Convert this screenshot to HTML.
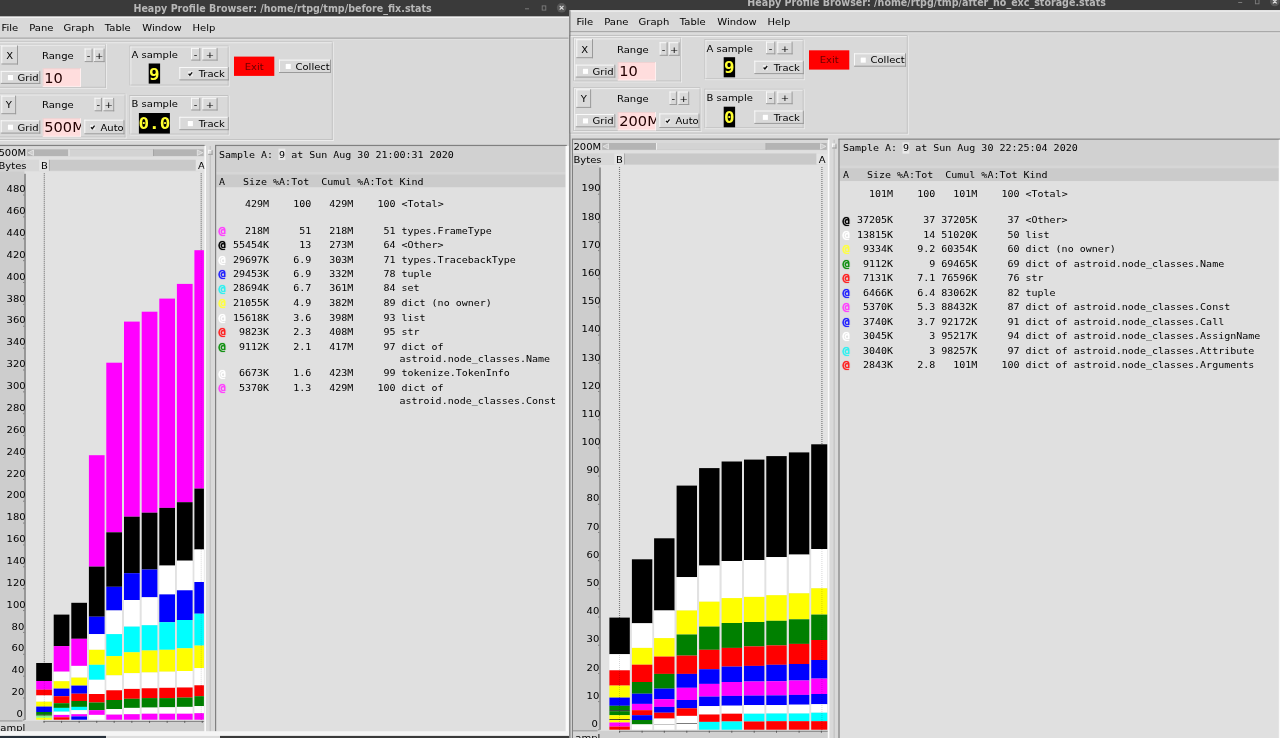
<!DOCTYPE html>
<html><head><meta charset="utf-8"><title>Heapy Profile Browser</title>
<style>
html,body{margin:0;padding:0;}
body{width:1280px;height:738px;overflow:hidden;position:relative;background:#d9d9d9;font-family:'DejaVu Sans','Liberation Sans',sans-serif;font-size:10px;color:#000;}
div,svg,span{position:absolute;margin:0;padding:0;}
#L,#R{top:0;height:738px;overflow:hidden;will-change:transform;}
#L{left:0;width:569px;}
#R{left:569px;width:711px;background:#d9d9d9;}
</style></head><body>

<div id="L">
<svg style="left:0;top:0" width="569" height="738" viewBox="0 0 569 738">
<rect x="-8.00" y="-10.00" width="577.40" height="26.55" fill="#3a3a3a"/>
<rect x="-5.00" y="16.55" width="574.40" height="1.40" fill="#f2f2f2"/>
<rect x="525.00" y="8.30" width="4.00" height="1.00" fill="#7a7a7a"/>
<rect x="542.20" y="5.90" width="3.6" height="4.2" fill="none" stroke="#7d7d7d" stroke-width="0.9"/>
<circle cx="561.60" cy="7.80" r="4.8" fill="#585858"/><path transform="translate(561.60,7.80)" d="M-1.9 -1.9 L1.9 1.9 M1.9 -1.9 L-1.9 1.9" stroke="#dedede" stroke-width="1.2"/>
<rect x="-5.00" y="37.70" width="573.40" height="1.00" fill="#8a8a8a"/>
<rect x="-5.00" y="38.70" width="573.40" height="0.90" fill="#e4e4e4"/>
<rect x="-6.00" y="41.40" width="339.60" height="0.90" fill="#c0c0c0"/>
<rect x="-6.00" y="41.40" width="0.90" height="99.40" fill="#c0c0c0"/>
<rect x="-5.10" y="42.30" width="337.80" height="0.90" fill="#f0f0f0"/>
<rect x="-5.10" y="42.30" width="0.90" height="97.60" fill="#f0f0f0"/>
<rect x="-6.00" y="139.90" width="339.60" height="0.90" fill="#f0f0f0"/>
<rect x="332.70" y="41.40" width="0.90" height="99.40" fill="#f0f0f0"/>
<rect x="-5.10" y="139.00" width="337.80" height="0.90" fill="#c0c0c0"/>
<rect x="331.80" y="42.30" width="0.90" height="97.60" fill="#c0c0c0"/>
<rect x="-1.80" y="43.80" width="108.80" height="0.90" fill="#c0c0c0"/>
<rect x="-1.80" y="43.80" width="0.90" height="44.80" fill="#c0c0c0"/>
<rect x="-0.90" y="44.70" width="107.00" height="0.90" fill="#f0f0f0"/>
<rect x="-0.90" y="44.70" width="0.90" height="43.00" fill="#f0f0f0"/>
<rect x="-1.80" y="87.70" width="108.80" height="0.90" fill="#f0f0f0"/>
<rect x="106.10" y="43.80" width="0.90" height="44.80" fill="#f0f0f0"/>
<rect x="-0.90" y="86.80" width="107.00" height="0.90" fill="#c0c0c0"/>
<rect x="105.20" y="44.70" width="0.90" height="43.00" fill="#c0c0c0"/>
<rect x="1.30" y="45.50" width="16.70" height="19.00" fill="#d9d9d9"/>
<rect x="1.30" y="45.50" width="16.70" height="1.00" fill="#f8f8f8"/>
<rect x="1.30" y="45.50" width="1.00" height="19.00" fill="#f8f8f8"/>
<rect x="1.30" y="63.50" width="16.70" height="1.00" fill="#9a9a9a"/>
<rect x="17.00" y="45.50" width="1.00" height="19.00" fill="#9a9a9a"/>
<rect x="84.60" y="48.50" width="8.00" height="13.60" fill="#d9d9d9"/>
<rect x="84.60" y="48.50" width="8.00" height="1.00" fill="#f8f8f8"/>
<rect x="84.60" y="48.50" width="1.00" height="13.60" fill="#f8f8f8"/>
<rect x="84.60" y="61.10" width="8.00" height="1.00" fill="#9a9a9a"/>
<rect x="91.60" y="48.50" width="1.00" height="13.60" fill="#9a9a9a"/>
<rect x="93.80" y="48.50" width="10.80" height="13.60" fill="#d9d9d9"/>
<rect x="93.80" y="48.50" width="10.80" height="1.00" fill="#f8f8f8"/>
<rect x="93.80" y="48.50" width="1.00" height="13.60" fill="#f8f8f8"/>
<rect x="93.80" y="61.10" width="10.80" height="1.00" fill="#9a9a9a"/>
<rect x="103.60" y="48.50" width="1.00" height="13.60" fill="#9a9a9a"/>
<rect x="0.70" y="70.90" width="39.60" height="13.00" fill="#d9d9d9"/>
<rect x="0.70" y="70.90" width="39.60" height="1.00" fill="#f8f8f8"/>
<rect x="0.70" y="70.90" width="1.00" height="13.00" fill="#f8f8f8"/>
<rect x="0.70" y="82.90" width="39.60" height="1.00" fill="#9a9a9a"/>
<rect x="39.30" y="70.90" width="1.00" height="13.00" fill="#9a9a9a"/>
<rect x="7.30" y="74.50" width="5.70" height="5.70" fill="#d0d0d0"/>
<rect x="7.80" y="75.00" width="5.20" height="5.20" fill="#ffffff"/>
<rect x="42.80" y="68.40" width="38.20" height="18.30" fill="#ffdddd"/>
<rect x="42.80" y="68.40" width="38.20" height="0.80" fill="#ecd0d0"/>
<rect x="42.80" y="68.40" width="0.80" height="18.30" fill="#ecd0d0"/>
<rect x="42.80" y="85.90" width="38.20" height="0.80" fill="#fff4f4"/>
<rect x="80.20" y="68.40" width="0.80" height="18.30" fill="#fff4f4"/>
<rect x="-1.80" y="93.60" width="128.20" height="0.90" fill="#c0c0c0"/>
<rect x="-1.80" y="93.60" width="0.90" height="44.70" fill="#c0c0c0"/>
<rect x="-0.90" y="94.50" width="126.40" height="0.90" fill="#f0f0f0"/>
<rect x="-0.90" y="94.50" width="0.90" height="42.90" fill="#f0f0f0"/>
<rect x="-1.80" y="137.40" width="128.20" height="0.90" fill="#f0f0f0"/>
<rect x="125.50" y="93.60" width="0.90" height="44.70" fill="#f0f0f0"/>
<rect x="-0.90" y="136.50" width="126.40" height="0.90" fill="#c0c0c0"/>
<rect x="124.60" y="94.50" width="0.90" height="42.90" fill="#c0c0c0"/>
<rect x="1.30" y="95.60" width="14.80" height="18.60" fill="#d9d9d9"/>
<rect x="1.30" y="95.60" width="14.80" height="1.00" fill="#f8f8f8"/>
<rect x="1.30" y="95.60" width="1.00" height="18.60" fill="#f8f8f8"/>
<rect x="1.30" y="113.20" width="14.80" height="1.00" fill="#9a9a9a"/>
<rect x="15.10" y="95.60" width="1.00" height="18.60" fill="#9a9a9a"/>
<rect x="94.50" y="97.80" width="7.40" height="13.50" fill="#d9d9d9"/>
<rect x="94.50" y="97.80" width="7.40" height="1.00" fill="#f8f8f8"/>
<rect x="94.50" y="97.80" width="1.00" height="13.50" fill="#f8f8f8"/>
<rect x="94.50" y="110.30" width="7.40" height="1.00" fill="#9a9a9a"/>
<rect x="100.90" y="97.80" width="1.00" height="13.50" fill="#9a9a9a"/>
<rect x="103.40" y="97.80" width="10.80" height="13.50" fill="#d9d9d9"/>
<rect x="103.40" y="97.80" width="10.80" height="1.00" fill="#f8f8f8"/>
<rect x="103.40" y="97.80" width="1.00" height="13.50" fill="#f8f8f8"/>
<rect x="103.40" y="110.30" width="10.80" height="1.00" fill="#9a9a9a"/>
<rect x="113.20" y="97.80" width="1.00" height="13.50" fill="#9a9a9a"/>
<rect x="0.70" y="120.30" width="39.60" height="13.30" fill="#d9d9d9"/>
<rect x="0.70" y="120.30" width="39.60" height="1.00" fill="#f8f8f8"/>
<rect x="0.70" y="120.30" width="1.00" height="13.30" fill="#f8f8f8"/>
<rect x="0.70" y="132.60" width="39.60" height="1.00" fill="#9a9a9a"/>
<rect x="39.30" y="120.30" width="1.00" height="13.30" fill="#9a9a9a"/>
<rect x="7.30" y="124.10" width="5.70" height="5.70" fill="#d0d0d0"/>
<rect x="7.80" y="124.60" width="5.20" height="5.20" fill="#ffffff"/>
<rect x="42.80" y="118.30" width="38.20" height="18.30" fill="#ffdddd"/>
<rect x="42.80" y="118.30" width="38.20" height="0.80" fill="#ecd0d0"/>
<rect x="42.80" y="118.30" width="0.80" height="18.30" fill="#ecd0d0"/>
<rect x="42.80" y="135.80" width="38.20" height="0.80" fill="#fff4f4"/>
<rect x="80.20" y="118.30" width="0.80" height="18.30" fill="#fff4f4"/>
<rect x="84.30" y="119.70" width="40.20" height="14.60" fill="#d9d9d9"/>
<rect x="84.30" y="119.70" width="40.20" height="1.00" fill="#f8f8f8"/>
<rect x="84.30" y="119.70" width="1.00" height="14.60" fill="#f8f8f8"/>
<rect x="84.30" y="133.30" width="40.20" height="1.00" fill="#9a9a9a"/>
<rect x="123.50" y="119.70" width="1.00" height="14.60" fill="#9a9a9a"/>
<rect x="89.60" y="124.10" width="5.70" height="5.70" fill="#d0d0d0"/>
<rect x="90.10" y="124.60" width="5.20" height="5.20" fill="#f0f0f0"/>
<path transform="translate(90.10,124.60)" d="M0.9 2.6 L2.2 4.0 L4.5 1.1" fill="none" stroke="#111" stroke-width="1.35"/>
<rect x="129.50" y="45.60" width="100.00" height="0.90" fill="#c0c0c0"/>
<rect x="129.50" y="45.60" width="0.90" height="40.80" fill="#c0c0c0"/>
<rect x="130.40" y="46.50" width="98.20" height="0.90" fill="#f0f0f0"/>
<rect x="130.40" y="46.50" width="0.90" height="39.00" fill="#f0f0f0"/>
<rect x="129.50" y="85.50" width="100.00" height="0.90" fill="#f0f0f0"/>
<rect x="228.60" y="45.60" width="0.90" height="40.80" fill="#f0f0f0"/>
<rect x="130.40" y="84.60" width="98.20" height="0.90" fill="#c0c0c0"/>
<rect x="227.70" y="46.50" width="0.90" height="39.00" fill="#c0c0c0"/>
<rect x="191.00" y="47.90" width="9.30" height="12.70" fill="#d9d9d9"/>
<rect x="191.00" y="47.90" width="9.30" height="1.00" fill="#f8f8f8"/>
<rect x="191.00" y="47.90" width="1.00" height="12.70" fill="#f8f8f8"/>
<rect x="191.00" y="59.60" width="9.30" height="1.00" fill="#9a9a9a"/>
<rect x="199.30" y="47.90" width="1.00" height="12.70" fill="#9a9a9a"/>
<rect x="202.30" y="47.90" width="15.30" height="12.70" fill="#d9d9d9"/>
<rect x="202.30" y="47.90" width="15.30" height="1.00" fill="#f8f8f8"/>
<rect x="202.30" y="47.90" width="1.00" height="12.70" fill="#f8f8f8"/>
<rect x="202.30" y="59.60" width="15.30" height="1.00" fill="#9a9a9a"/>
<rect x="216.60" y="47.90" width="1.00" height="12.70" fill="#9a9a9a"/>
<rect x="148.70" y="63.50" width="11.40" height="20.10" fill="#000"/>
<rect x="179.30" y="67.00" width="49.50" height="13.40" fill="#d9d9d9"/>
<rect x="179.30" y="67.00" width="49.50" height="1.00" fill="#f8f8f8"/>
<rect x="179.30" y="67.00" width="1.00" height="13.40" fill="#f8f8f8"/>
<rect x="179.30" y="79.40" width="49.50" height="1.00" fill="#9a9a9a"/>
<rect x="227.80" y="67.00" width="1.00" height="13.40" fill="#9a9a9a"/>
<rect x="187.20" y="70.70" width="5.70" height="5.70" fill="#d0d0d0"/>
<rect x="187.70" y="71.20" width="5.20" height="5.20" fill="#f0f0f0"/>
<path transform="translate(187.70,71.20)" d="M0.9 2.6 L2.2 4.0 L4.5 1.1" fill="none" stroke="#111" stroke-width="1.35"/>
<rect x="234.00" y="56.60" width="40.30" height="19.30" fill="#ff0000"/>
<rect x="279.00" y="59.60" width="52.00" height="13.40" fill="#d9d9d9"/>
<rect x="279.00" y="59.60" width="52.00" height="1.00" fill="#f8f8f8"/>
<rect x="279.00" y="59.60" width="1.00" height="13.40" fill="#f8f8f8"/>
<rect x="279.00" y="72.00" width="52.00" height="1.00" fill="#9a9a9a"/>
<rect x="330.00" y="59.60" width="1.00" height="13.40" fill="#9a9a9a"/>
<rect x="285.10" y="63.30" width="5.70" height="5.70" fill="#d0d0d0"/>
<rect x="285.60" y="63.80" width="5.20" height="5.20" fill="#ffffff"/>
<rect x="129.50" y="95.10" width="100.00" height="0.90" fill="#c0c0c0"/>
<rect x="129.50" y="95.10" width="0.90" height="40.30" fill="#c0c0c0"/>
<rect x="130.40" y="96.00" width="98.20" height="0.90" fill="#f0f0f0"/>
<rect x="130.40" y="96.00" width="0.90" height="38.50" fill="#f0f0f0"/>
<rect x="129.50" y="134.50" width="100.00" height="0.90" fill="#f0f0f0"/>
<rect x="228.60" y="95.10" width="0.90" height="40.30" fill="#f0f0f0"/>
<rect x="130.40" y="133.60" width="98.20" height="0.90" fill="#c0c0c0"/>
<rect x="227.70" y="96.00" width="0.90" height="38.50" fill="#c0c0c0"/>
<rect x="191.00" y="97.80" width="9.30" height="12.70" fill="#d9d9d9"/>
<rect x="191.00" y="97.80" width="9.30" height="1.00" fill="#f8f8f8"/>
<rect x="191.00" y="97.80" width="1.00" height="12.70" fill="#f8f8f8"/>
<rect x="191.00" y="109.50" width="9.30" height="1.00" fill="#9a9a9a"/>
<rect x="199.30" y="97.80" width="1.00" height="12.70" fill="#9a9a9a"/>
<rect x="202.30" y="97.80" width="15.30" height="12.70" fill="#d9d9d9"/>
<rect x="202.30" y="97.80" width="15.30" height="1.00" fill="#f8f8f8"/>
<rect x="202.30" y="97.80" width="1.00" height="12.70" fill="#f8f8f8"/>
<rect x="202.30" y="109.50" width="15.30" height="1.00" fill="#9a9a9a"/>
<rect x="216.60" y="97.80" width="1.00" height="12.70" fill="#9a9a9a"/>
<rect x="138.90" y="113.00" width="31.00" height="20.60" fill="#000"/>
<rect x="179.30" y="116.80" width="49.50" height="13.40" fill="#d9d9d9"/>
<rect x="179.30" y="116.80" width="49.50" height="1.00" fill="#f8f8f8"/>
<rect x="179.30" y="116.80" width="1.00" height="13.40" fill="#f8f8f8"/>
<rect x="179.30" y="129.20" width="49.50" height="1.00" fill="#9a9a9a"/>
<rect x="227.80" y="116.80" width="1.00" height="13.40" fill="#9a9a9a"/>
<rect x="187.20" y="120.50" width="5.70" height="5.70" fill="#d0d0d0"/>
<rect x="187.70" y="121.00" width="5.20" height="5.20" fill="#ffffff"/>
<rect x="27.20" y="149.30" width="176.40" height="6.80" fill="#b4b4b4"/>
<rect x="68.50" y="149.30" width="85.50" height="6.80" fill="#d3d3d3"/>
<rect x="68.50" y="149.30" width="0.90" height="6.80" fill="#f0f0f0"/>
<rect x="153.10" y="149.30" width="0.90" height="6.80" fill="#a0a0a0"/>
<path transform="translate(27.20,149.30)" d="M0.8 3.4 L6.3 0.7 L6.3 6.1 Z" fill="#cdcdcd" stroke="#ececec" stroke-width="0.7"/>
<path transform="translate(196.40,149.30)" d="M6.4 3.4 L0.9 0.7 L0.9 6.1 Z" fill="#cdcdcd" stroke="#ececec" stroke-width="0.7"/>
<rect x="-4.00" y="156.60" width="208.40" height="3.20" fill="#e0e0e0"/>
<rect x="-4.00" y="159.80" width="28.60" height="10.90" fill="#d2d2d2"/>
<rect x="24.60" y="159.80" width="14.70" height="10.90" fill="#d8d8d8"/>
<rect x="49.10" y="159.80" width="146.70" height="10.90" fill="#c9c9c9"/>
<rect x="39.10" y="159.80" width="10.00" height="10.90" fill="#e4e4e4"/>
<rect x="48.90" y="159.80" width="0.90" height="10.90" fill="#a6a6a6"/>
<rect x="195.80" y="159.80" width="8.60" height="10.90" fill="#e4e4e4"/>
<rect x="-4.00" y="171.30" width="28.60" height="549.60" fill="#cdcdcd"/>
<rect x="24.60" y="171.30" width="179.80" height="549.60" fill="#e2e2e2"/>
<rect x="24.20" y="173.80" width="1.60" height="546.10" fill="#858585"/>
<rect x="23.10" y="719.40" width="1.30" height="1.00" fill="#777"/>
<rect x="23.10" y="697.53" width="1.30" height="1.00" fill="#777"/>
<rect x="23.10" y="675.66" width="1.30" height="1.00" fill="#777"/>
<rect x="23.10" y="653.79" width="1.30" height="1.00" fill="#777"/>
<rect x="23.10" y="631.92" width="1.30" height="1.00" fill="#777"/>
<rect x="23.10" y="610.05" width="1.30" height="1.00" fill="#777"/>
<rect x="23.10" y="588.18" width="1.30" height="1.00" fill="#777"/>
<rect x="23.10" y="566.31" width="1.30" height="1.00" fill="#777"/>
<rect x="23.10" y="544.44" width="1.30" height="1.00" fill="#777"/>
<rect x="23.10" y="522.57" width="1.30" height="1.00" fill="#777"/>
<rect x="23.10" y="500.70" width="1.30" height="1.00" fill="#777"/>
<rect x="23.10" y="478.83" width="1.30" height="1.00" fill="#777"/>
<rect x="23.10" y="456.96" width="1.30" height="1.00" fill="#777"/>
<rect x="23.10" y="435.09" width="1.30" height="1.00" fill="#777"/>
<rect x="23.10" y="413.22" width="1.30" height="1.00" fill="#777"/>
<rect x="23.10" y="391.35" width="1.30" height="1.00" fill="#777"/>
<rect x="23.10" y="369.48" width="1.30" height="1.00" fill="#777"/>
<rect x="23.10" y="347.61" width="1.30" height="1.00" fill="#777"/>
<rect x="23.10" y="325.74" width="1.30" height="1.00" fill="#777"/>
<rect x="23.10" y="303.87" width="1.30" height="1.00" fill="#777"/>
<rect x="23.10" y="282.00" width="1.30" height="1.00" fill="#777"/>
<rect x="23.10" y="260.13" width="1.30" height="1.00" fill="#777"/>
<rect x="23.10" y="238.26" width="1.30" height="1.00" fill="#777"/>
<rect x="23.10" y="216.39" width="1.30" height="1.00" fill="#777"/>
<rect x="23.10" y="194.52" width="1.30" height="1.00" fill="#777"/>
<line x1="44.30" y1="173.30" x2="44.30" y2="719.90" stroke="#909090" stroke-width="1.2" stroke-dasharray="1 1"/>
<line x1="201.20" y1="173.30" x2="201.20" y2="719.90" stroke="#909090" stroke-width="1.2" stroke-dasharray="1 1"/>
<rect x="36.20" y="663.00" width="15.70" height="18.00" fill="#000000"/>
<rect x="36.20" y="681.00" width="15.70" height="8.70" fill="#ff00ff"/>
<rect x="36.20" y="689.70" width="15.70" height="5.80" fill="#ff0000"/>
<rect x="36.20" y="695.50" width="15.70" height="6.20" fill="#ffffff"/>
<rect x="36.20" y="701.70" width="15.70" height="4.90" fill="#ffff00"/>
<rect x="36.20" y="706.60" width="15.70" height="5.40" fill="#0000ff"/>
<rect x="36.20" y="712.00" width="15.70" height="2.80" fill="#008000"/>
<rect x="36.20" y="714.80" width="15.70" height="0.80" fill="#000000"/>
<rect x="36.20" y="715.60" width="15.70" height="2.20" fill="#80ff80"/>
<rect x="36.20" y="717.80" width="15.70" height="1.90" fill="#ffff00"/>
<rect x="53.70" y="614.60" width="15.70" height="31.50" fill="#000000"/>
<rect x="53.70" y="646.10" width="15.70" height="25.60" fill="#ff00ff"/>
<rect x="53.70" y="671.70" width="15.70" height="9.50" fill="#ffffff"/>
<rect x="53.70" y="681.20" width="15.70" height="7.40" fill="#ffff00"/>
<rect x="53.70" y="688.60" width="15.70" height="7.60" fill="#0000ff"/>
<rect x="53.70" y="696.20" width="15.70" height="7.00" fill="#ff0000"/>
<rect x="53.70" y="703.20" width="15.70" height="4.70" fill="#008000"/>
<rect x="53.70" y="707.90" width="15.70" height="3.80" fill="#00ffff"/>
<rect x="53.70" y="711.70" width="15.70" height="3.20" fill="#ffffff"/>
<rect x="53.70" y="714.90" width="15.70" height="2.40" fill="#ff00ff"/>
<rect x="53.70" y="717.30" width="15.70" height="2.40" fill="#ff0000"/>
<rect x="71.30" y="602.80" width="15.70" height="36.00" fill="#000000"/>
<rect x="71.30" y="638.80" width="15.70" height="27.10" fill="#ff00ff"/>
<rect x="71.30" y="665.90" width="15.70" height="11.70" fill="#ffffff"/>
<rect x="71.30" y="677.60" width="15.70" height="8.00" fill="#ffff00"/>
<rect x="71.30" y="685.60" width="15.70" height="8.10" fill="#0000ff"/>
<rect x="71.30" y="693.70" width="15.70" height="7.30" fill="#ff0000"/>
<rect x="71.30" y="701.00" width="15.70" height="5.90" fill="#008000"/>
<rect x="71.30" y="706.90" width="15.70" height="3.30" fill="#00ffff"/>
<rect x="71.30" y="710.20" width="15.70" height="4.00" fill="#ffffff"/>
<rect x="71.30" y="714.20" width="15.70" height="2.20" fill="#ff00ff"/>
<rect x="71.30" y="716.40" width="15.70" height="3.30" fill="#0000ff"/>
<rect x="88.90" y="455.20" width="15.70" height="111.40" fill="#ff00ff"/>
<rect x="88.90" y="566.60" width="15.70" height="50.10" fill="#000000"/>
<rect x="88.90" y="616.70" width="15.70" height="17.40" fill="#0000ff"/>
<rect x="88.90" y="634.10" width="15.70" height="15.70" fill="#ffffff"/>
<rect x="88.90" y="649.80" width="15.70" height="15.00" fill="#ffff00"/>
<rect x="88.90" y="664.80" width="15.70" height="15.00" fill="#00ffff"/>
<rect x="88.90" y="679.80" width="15.70" height="14.20" fill="#ffffff"/>
<rect x="88.90" y="694.00" width="15.70" height="8.50" fill="#ff0000"/>
<rect x="88.90" y="702.50" width="15.70" height="7.70" fill="#008000"/>
<rect x="88.90" y="710.20" width="15.70" height="4.70" fill="#ff00ff"/>
<rect x="88.90" y="714.90" width="15.70" height="4.80" fill="#ffffff"/>
<rect x="106.30" y="362.70" width="15.70" height="169.60" fill="#ff00ff"/>
<rect x="106.30" y="532.30" width="15.70" height="54.50" fill="#000000"/>
<rect x="106.30" y="586.80" width="15.70" height="23.70" fill="#0000ff"/>
<rect x="106.30" y="610.50" width="15.70" height="23.60" fill="#ffffff"/>
<rect x="106.30" y="634.10" width="15.70" height="22.00" fill="#00ffff"/>
<rect x="106.30" y="656.10" width="15.70" height="19.30" fill="#ffff00"/>
<rect x="106.30" y="675.40" width="15.70" height="14.90" fill="#ffffff"/>
<rect x="106.30" y="690.30" width="15.70" height="9.70" fill="#ff0000"/>
<rect x="106.30" y="700.00" width="15.70" height="9.10" fill="#008000"/>
<rect x="106.30" y="709.10" width="15.70" height="5.50" fill="#ffffff"/>
<rect x="106.30" y="714.60" width="15.70" height="5.10" fill="#ff00ff"/>
<rect x="124.00" y="321.60" width="15.70" height="195.10" fill="#ff00ff"/>
<rect x="124.00" y="516.70" width="15.70" height="56.50" fill="#000000"/>
<rect x="124.00" y="573.20" width="15.70" height="26.80" fill="#0000ff"/>
<rect x="124.00" y="600.00" width="15.70" height="26.60" fill="#ffffff"/>
<rect x="124.00" y="626.60" width="15.70" height="25.70" fill="#00ffff"/>
<rect x="124.00" y="652.30" width="15.70" height="20.90" fill="#ffff00"/>
<rect x="124.00" y="673.20" width="15.70" height="15.70" fill="#ffffff"/>
<rect x="124.00" y="688.90" width="15.70" height="9.90" fill="#ff0000"/>
<rect x="124.00" y="698.80" width="15.70" height="9.10" fill="#008000"/>
<rect x="124.00" y="707.90" width="15.70" height="6.30" fill="#ffffff"/>
<rect x="124.00" y="714.20" width="15.70" height="5.50" fill="#ff00ff"/>
<rect x="141.70" y="311.70" width="15.70" height="201.00" fill="#ff00ff"/>
<rect x="141.70" y="512.70" width="15.70" height="56.80" fill="#000000"/>
<rect x="141.70" y="569.50" width="15.70" height="27.80" fill="#0000ff"/>
<rect x="141.70" y="597.30" width="15.70" height="27.90" fill="#ffffff"/>
<rect x="141.70" y="625.20" width="15.70" height="25.30" fill="#00ffff"/>
<rect x="141.70" y="650.50" width="15.70" height="22.00" fill="#ffff00"/>
<rect x="141.70" y="672.50" width="15.70" height="15.80" fill="#ffffff"/>
<rect x="141.70" y="688.30" width="15.70" height="9.80" fill="#ff0000"/>
<rect x="141.70" y="698.10" width="15.70" height="9.50" fill="#008000"/>
<rect x="141.70" y="707.60" width="15.70" height="6.10" fill="#ffffff"/>
<rect x="141.70" y="713.70" width="15.70" height="6.00" fill="#ff00ff"/>
<rect x="159.30" y="298.60" width="15.70" height="209.30" fill="#ff00ff"/>
<rect x="159.30" y="507.90" width="15.70" height="57.70" fill="#000000"/>
<rect x="159.30" y="565.60" width="15.70" height="28.80" fill="#ffffff"/>
<rect x="159.30" y="594.40" width="15.70" height="27.80" fill="#0000ff"/>
<rect x="159.30" y="622.20" width="15.70" height="27.60" fill="#00ffff"/>
<rect x="159.30" y="649.80" width="15.70" height="21.90" fill="#ffff00"/>
<rect x="159.30" y="671.70" width="15.70" height="16.10" fill="#ffffff"/>
<rect x="159.30" y="687.80" width="15.70" height="10.30" fill="#ff0000"/>
<rect x="159.30" y="698.10" width="15.70" height="9.20" fill="#008000"/>
<rect x="159.30" y="707.30" width="15.70" height="6.40" fill="#ffffff"/>
<rect x="159.30" y="713.70" width="15.70" height="6.00" fill="#ff00ff"/>
<rect x="176.90" y="283.90" width="15.70" height="218.30" fill="#ff00ff"/>
<rect x="176.90" y="502.20" width="15.70" height="58.50" fill="#000000"/>
<rect x="176.90" y="560.70" width="15.70" height="29.60" fill="#ffffff"/>
<rect x="176.90" y="590.30" width="15.70" height="29.70" fill="#0000ff"/>
<rect x="176.90" y="620.00" width="15.70" height="28.30" fill="#00ffff"/>
<rect x="176.90" y="648.30" width="15.70" height="22.70" fill="#ffff00"/>
<rect x="176.90" y="671.00" width="15.70" height="16.50" fill="#ffffff"/>
<rect x="176.90" y="687.50" width="15.70" height="10.10" fill="#ff0000"/>
<rect x="176.90" y="697.60" width="15.70" height="9.30" fill="#008000"/>
<rect x="176.90" y="706.90" width="15.70" height="6.80" fill="#ffffff"/>
<rect x="176.90" y="713.70" width="15.70" height="6.00" fill="#ff00ff"/>
<rect x="194.40" y="250.20" width="9.50" height="238.40" fill="#ff00ff"/>
<rect x="194.40" y="488.60" width="9.50" height="60.90" fill="#000000"/>
<rect x="194.40" y="549.50" width="9.50" height="32.50" fill="#ffffff"/>
<rect x="194.40" y="582.00" width="9.50" height="31.70" fill="#0000ff"/>
<rect x="194.40" y="613.70" width="9.50" height="31.90" fill="#00ffff"/>
<rect x="194.40" y="645.60" width="9.50" height="22.50" fill="#ffff00"/>
<rect x="194.40" y="668.10" width="9.50" height="17.20" fill="#ffffff"/>
<rect x="194.40" y="685.30" width="9.50" height="10.90" fill="#ff0000"/>
<rect x="194.40" y="696.20" width="9.50" height="9.90" fill="#008000"/>
<rect x="194.40" y="706.10" width="9.50" height="7.10" fill="#ffffff"/>
<rect x="194.40" y="713.20" width="9.50" height="6.50" fill="#ff00ff"/>
<line x1="44.30" y1="173.30" x2="44.30" y2="719.90" stroke="#000" stroke-opacity="0.16" stroke-width="1" stroke-dasharray="1 1"/>
<line x1="201.20" y1="173.30" x2="201.20" y2="719.90" stroke="#000" stroke-opacity="0.16" stroke-width="1" stroke-dasharray="1 1"/>
<rect x="-4.00" y="720.90" width="208.40" height="10.30" fill="#d0d0d0"/>
<rect x="-4.00" y="720.90" width="28.20" height="10.30" fill="#d6d6d6"/>
<rect x="-4.00" y="720.50" width="26.60" height="0.90" fill="#8a8a8a"/>
<rect x="43.55" y="720.90" width="160.85" height="0.90" fill="#777"/>
<rect x="43.55" y="720.90" width="1.00" height="1.90" fill="#555"/>
<rect x="61.05" y="720.90" width="1.00" height="1.90" fill="#555"/>
<rect x="78.65" y="720.90" width="1.00" height="1.90" fill="#555"/>
<rect x="96.25" y="720.90" width="1.00" height="1.90" fill="#555"/>
<rect x="113.65" y="720.90" width="1.00" height="1.90" fill="#555"/>
<rect x="131.35" y="720.90" width="1.00" height="1.90" fill="#555"/>
<rect x="149.05" y="720.90" width="1.00" height="1.90" fill="#555"/>
<rect x="166.65" y="720.90" width="1.00" height="1.90" fill="#555"/>
<rect x="184.25" y="720.90" width="1.00" height="1.90" fill="#555"/>
<rect x="201.75" y="720.90" width="1.00" height="1.90" fill="#555"/>
<rect x="-5.10" y="144.85" width="209.70" height="1.20" fill="#808080"/>
<rect x="-5.10" y="145.40" width="1.10" height="614.60" fill="#808080"/>
<rect x="204.40" y="146.00" width="1.60" height="614.60" fill="#fafafa"/>
<rect x="216.20" y="146.00" width="349.40" height="26.20" fill="#d1d1d1"/>
<rect x="216.20" y="172.00" width="349.40" height="2.60" fill="#d6d6d6"/>
<rect x="216.20" y="174.50" width="349.40" height="12.90" fill="#cbcbcb"/>
<rect x="216.20" y="187.40" width="349.40" height="544.20" fill="#e0e0e0"/>
<rect x="215.00" y="144.85" width="351.80" height="1.20" fill="#808080"/>
<rect x="215.00" y="145.40" width="1.20" height="586.20" fill="#808080"/>
<rect x="565.60" y="146.00" width="3.20" height="586.20" fill="#fafafa"/>
<rect x="278.50" y="148.60" width="6.80" height="11.40" fill="#e9e9e9"/>
<rect x="209.70" y="146.00" width="1.10" height="700.00" fill="#c0c0c0"/>
<rect x="208.10" y="149.90" width="4.50" height="4.90" fill="#d9d9d9"/>
<rect x="208.10" y="149.90" width="4.50" height="1.00" fill="#f8f8f8"/>
<rect x="208.10" y="149.90" width="1.00" height="4.90" fill="#f8f8f8"/>
<rect x="208.10" y="153.80" width="4.50" height="1.00" fill="#9a9a9a"/>
<rect x="211.60" y="149.90" width="1.00" height="4.90" fill="#9a9a9a"/>
<rect x="-4.00" y="731.20" width="580.00" height="4.80" fill="#f5f5f5"/>
<rect x="-4.00" y="735.90" width="110.00" height="3.00" fill="#27303a"/>
<rect x="106.00" y="735.90" width="114.00" height="3.00" fill="#dcdcdc"/>
<rect x="220.00" y="735.90" width="350.00" height="3.00" fill="#3a3a3a"/>
</svg>
<div style="top:-2.00px;height:21.2px;line-height:21.2px;font-size:10.6px;color:#b8b8b8;white-space:pre;transform:scaleY(0.93);font-weight:bold;left:82.60px;width:400px;text-align:center;font-stretch:condensed;font-family:'DejaVu Sans Condensed','DejaVu Sans',sans-serif;">Heapy Profile Browser: /home/rtpg/tmp/before_fix.stats</div>
<div style="top:18.20px;height:20px;line-height:20px;font-size:10px;color:#000;white-space:pre;transform:scaleY(0.93);left:1.40px;">File</div>
<div style="top:18.20px;height:20px;line-height:20px;font-size:10px;color:#000;white-space:pre;transform:scaleY(0.93);left:29.20px;">Pane</div>
<div style="top:18.20px;height:20px;line-height:20px;font-size:10px;color:#000;white-space:pre;transform:scaleY(0.93);left:63.60px;">Graph</div>
<div style="top:18.20px;height:20px;line-height:20px;font-size:10px;color:#000;white-space:pre;transform:scaleY(0.93);left:104.80px;">Table</div>
<div style="top:18.20px;height:20px;line-height:20px;font-size:10px;color:#000;white-space:pre;transform:scaleY(0.93);left:142.30px;">Window</div>
<div style="top:18.20px;height:20px;line-height:20px;font-size:10px;color:#000;white-space:pre;transform:scaleY(0.93);left:192.60px;">Help</div>
<div style="top:45.80px;height:20px;line-height:20px;font-size:10px;color:#000;white-space:pre;transform:scaleY(0.93);left:-190.30px;width:400px;text-align:center;">X</div>
<div style="top:45.80px;height:20px;line-height:20px;font-size:10px;color:#000;white-space:pre;transform:scaleY(0.93);left:42.00px;">Range</div>
<div style="top:45.80px;height:20px;line-height:20px;font-size:10px;color:#000;white-space:pre;transform:scaleY(0.93);left:-111.40px;width:400px;text-align:center;">-</div>
<div style="top:45.80px;height:20px;line-height:20px;font-size:10px;color:#000;white-space:pre;transform:scaleY(0.93);left:-100.70px;width:400px;text-align:center;">+</div>
<div style="top:67.90px;height:20px;line-height:20px;font-size:10px;color:#000;white-space:pre;transform:scaleY(0.93);left:17.60px;">Grid</div>
<div style="left:42.80px;top:68.40px;width:38.20px;height:18.30px;overflow:hidden;"><span style="position:absolute;left:1.5px;top:-0.90px;font-size:14.6px;line-height:20px;color:#200;transform:scaleY(0.93);transform-origin:50% 70%;">10</span></div>
<div style="top:95.40px;height:20px;line-height:20px;font-size:10px;color:#000;white-space:pre;transform:scaleY(0.93);left:-191.20px;width:400px;text-align:center;">Y</div>
<div style="top:95.40px;height:20px;line-height:20px;font-size:10px;color:#000;white-space:pre;transform:scaleY(0.93);left:42.00px;">Range</div>
<div style="top:95.40px;height:20px;line-height:20px;font-size:10px;color:#000;white-space:pre;transform:scaleY(0.93);left:-101.80px;width:400px;text-align:center;">-</div>
<div style="top:95.40px;height:20px;line-height:20px;font-size:10px;color:#000;white-space:pre;transform:scaleY(0.93);left:-91.20px;width:400px;text-align:center;">+</div>
<div style="top:117.50px;height:20px;line-height:20px;font-size:10px;color:#000;white-space:pre;transform:scaleY(0.93);left:17.60px;">Grid</div>
<div style="left:42.80px;top:118.30px;width:38.20px;height:18.30px;overflow:hidden;"><span style="position:absolute;left:1.5px;top:-0.90px;font-size:14.6px;line-height:20px;color:#200;transform:scaleY(0.93);transform-origin:50% 70%;">500M</span></div>
<div style="top:117.50px;height:20px;line-height:20px;font-size:10px;color:#000;white-space:pre;transform:scaleY(0.93);left:100.50px;">Auto</div>
<div style="top:44.80px;height:20px;line-height:20px;font-size:10px;color:#000;white-space:pre;transform:scaleY(0.93);left:131.50px;">A sample</div>
<div style="top:44.80px;height:20px;line-height:20px;font-size:10px;color:#000;white-space:pre;transform:scaleY(0.93);left:-4.40px;width:400px;text-align:center;">-</div>
<div style="top:44.80px;height:20px;line-height:20px;font-size:10px;color:#000;white-space:pre;transform:scaleY(0.93);left:10.00px;width:400px;text-align:center;">+</div>
<div style="top:56.60px;height:35.2px;line-height:35.2px;font-size:17.6px;color:#ffff30;white-space:pre;transform:scaleY(0.93);font-family:'DejaVu Sans Mono','Liberation Mono',monospace;font-weight:bold;left:-45.60px;width:400px;text-align:center;">9</div>
<div style="top:64.00px;height:20px;line-height:20px;font-size:10px;color:#000;white-space:pre;transform:scaleY(0.93);left:198.70px;">Track</div>
<div style="top:56.70px;height:20px;line-height:20px;font-size:10px;color:#680000;white-space:pre;transform:scaleY(0.93);left:54.20px;width:400px;text-align:center;">Exit</div>
<div style="top:56.70px;height:20px;line-height:20px;font-size:10px;color:#000;white-space:pre;transform:scaleY(0.93);left:295.50px;">Collect</div>
<div style="top:94.30px;height:20px;line-height:20px;font-size:10px;color:#000;white-space:pre;transform:scaleY(0.93);left:131.50px;">B sample</div>
<div style="top:94.70px;height:20px;line-height:20px;font-size:10px;color:#000;white-space:pre;transform:scaleY(0.93);left:-4.40px;width:400px;text-align:center;">-</div>
<div style="top:94.70px;height:20px;line-height:20px;font-size:10px;color:#000;white-space:pre;transform:scaleY(0.93);left:10.00px;width:400px;text-align:center;">+</div>
<div style="top:106.20px;height:35.2px;line-height:35.2px;font-size:17.6px;color:#ffff30;white-space:pre;transform:scaleY(0.93);font-family:'DejaVu Sans Mono','Liberation Mono',monospace;font-weight:bold;left:-45.60px;width:400px;text-align:center;">0.0</div>
<div style="top:113.80px;height:20px;line-height:20px;font-size:10px;color:#000;white-space:pre;transform:scaleY(0.93);left:198.70px;">Track</div>
<div style="top:143.40px;height:20px;line-height:20px;font-size:10px;color:#000;white-space:pre;transform:scaleY(0.93);left:-1.50px;">500M</div>
<div style="top:155.80px;height:20px;line-height:20px;font-size:10px;color:#000;white-space:pre;transform:scaleY(0.93);left:-155.70px;width:400px;text-align:center;">B</div>
<div style="top:155.80px;height:20px;line-height:20px;font-size:10px;color:#000;white-space:pre;transform:scaleY(0.93);left:1.40px;width:400px;text-align:center;clip-path:inset(0 197.00px 0 0);">A</div>
<div style="top:156.40px;height:20px;line-height:20px;font-size:10px;color:#000;white-space:pre;transform:scaleY(0.93);left:-1.50px;">Bytes</div>
<div style="left:-4.00px;top:171.30px;width:29.00px;height:548.60px;overflow:hidden;"><span style="position:absolute;left:20.47px;top:532.80px;line-height:20px;font-size:10px;transform:scaleY(0.93);">0</span><span style="position:absolute;left:15.54px;top:510.93px;line-height:20px;font-size:10px;transform:scaleY(0.93);">20</span><span style="position:absolute;left:15.54px;top:489.06px;line-height:20px;font-size:10px;transform:scaleY(0.93);">40</span><span style="position:absolute;left:15.54px;top:467.19px;line-height:20px;font-size:10px;transform:scaleY(0.93);">60</span><span style="position:absolute;left:15.54px;top:445.32px;line-height:20px;font-size:10px;transform:scaleY(0.93);">80</span><span style="position:absolute;left:10.61px;top:423.45px;line-height:20px;font-size:10px;transform:scaleY(0.93);">100</span><span style="position:absolute;left:10.61px;top:401.58px;line-height:20px;font-size:10px;transform:scaleY(0.93);">120</span><span style="position:absolute;left:10.61px;top:379.71px;line-height:20px;font-size:10px;transform:scaleY(0.93);">140</span><span style="position:absolute;left:10.61px;top:357.84px;line-height:20px;font-size:10px;transform:scaleY(0.93);">160</span><span style="position:absolute;left:10.61px;top:335.97px;line-height:20px;font-size:10px;transform:scaleY(0.93);">180</span><span style="position:absolute;left:10.61px;top:314.10px;line-height:20px;font-size:10px;transform:scaleY(0.93);">200</span><span style="position:absolute;left:10.61px;top:292.23px;line-height:20px;font-size:10px;transform:scaleY(0.93);">220</span><span style="position:absolute;left:10.61px;top:270.36px;line-height:20px;font-size:10px;transform:scaleY(0.93);">240</span><span style="position:absolute;left:10.61px;top:248.49px;line-height:20px;font-size:10px;transform:scaleY(0.93);">260</span><span style="position:absolute;left:10.61px;top:226.62px;line-height:20px;font-size:10px;transform:scaleY(0.93);">280</span><span style="position:absolute;left:10.61px;top:204.75px;line-height:20px;font-size:10px;transform:scaleY(0.93);">300</span><span style="position:absolute;left:10.61px;top:182.88px;line-height:20px;font-size:10px;transform:scaleY(0.93);">320</span><span style="position:absolute;left:10.61px;top:161.01px;line-height:20px;font-size:10px;transform:scaleY(0.93);">340</span><span style="position:absolute;left:10.61px;top:139.14px;line-height:20px;font-size:10px;transform:scaleY(0.93);">360</span><span style="position:absolute;left:10.61px;top:117.27px;line-height:20px;font-size:10px;transform:scaleY(0.93);">380</span><span style="position:absolute;left:10.61px;top:95.40px;line-height:20px;font-size:10px;transform:scaleY(0.93);">400</span><span style="position:absolute;left:10.61px;top:73.53px;line-height:20px;font-size:10px;transform:scaleY(0.93);">420</span><span style="position:absolute;left:10.61px;top:51.66px;line-height:20px;font-size:10px;transform:scaleY(0.93);">440</span><span style="position:absolute;left:10.61px;top:29.79px;line-height:20px;font-size:10px;transform:scaleY(0.93);">460</span><span style="position:absolute;left:10.61px;top:7.92px;line-height:20px;font-size:10px;transform:scaleY(0.93);">480</span></div>
<div style="left:-0.40px;top:720.90px;width:25.60px;height:10.30px;overflow:hidden;"><span style="position:absolute;left:-5.6px;top:-3.30px;line-height:20px;font-size:10px;transform:scaleY(0.93);">Sample</span></div>
<div style="left:-4.00px;top:723.10px;width:208.40px;height:8.10px;overflow:hidden;"><span style="position:absolute;left:38.05px;width:20px;text-align:center;top:1.50px;line-height:20px;font-size:10px;transform:scaleY(0.93);">0</span><span style="position:absolute;left:55.55px;width:20px;text-align:center;top:1.50px;line-height:20px;font-size:10px;transform:scaleY(0.93);">1</span><span style="position:absolute;left:73.15px;width:20px;text-align:center;top:1.50px;line-height:20px;font-size:10px;transform:scaleY(0.93);">2</span><span style="position:absolute;left:90.75px;width:20px;text-align:center;top:1.50px;line-height:20px;font-size:10px;transform:scaleY(0.93);">3</span><span style="position:absolute;left:108.15px;width:20px;text-align:center;top:1.50px;line-height:20px;font-size:10px;transform:scaleY(0.93);">4</span><span style="position:absolute;left:125.85px;width:20px;text-align:center;top:1.50px;line-height:20px;font-size:10px;transform:scaleY(0.93);">5</span><span style="position:absolute;left:143.55px;width:20px;text-align:center;top:1.50px;line-height:20px;font-size:10px;transform:scaleY(0.93);">6</span><span style="position:absolute;left:161.15px;width:20px;text-align:center;top:1.50px;line-height:20px;font-size:10px;transform:scaleY(0.93);">7</span><span style="position:absolute;left:178.75px;width:20px;text-align:center;top:1.50px;line-height:20px;font-size:10px;transform:scaleY(0.93);">8</span><span style="position:absolute;left:196.25px;width:20px;text-align:center;top:1.50px;line-height:20px;font-size:10px;transform:scaleY(0.93);">9</span></div>
<div style="top:144.60px;height:20px;line-height:20px;font-size:10px;color:#000;white-space:pre;transform:scaleY(0.93);font-family:'DejaVu Sans Mono','Liberation Mono',monospace;left:218.90px;">Sample A: 9 at Sun Aug 30 21:00:31 2020</div>
<div style="top:171.70px;height:20px;line-height:20px;font-size:10px;color:#000;white-space:pre;transform:scaleY(0.93);font-family:'DejaVu Sans Mono','Liberation Mono',monospace;left:218.90px;">A   Size %A:Tot  Cumul %A:Tot Kind</div>
<div style="top:193.70px;height:20px;line-height:20px;font-size:10px;color:#000;white-space:pre;transform:scaleY(0.93);font-family:'DejaVu Sans Mono','Liberation Mono',monospace;left:220.90px;">    429M    100   429M    100 &lt;Total&gt;</div>
<div style="top:217.80px;height:24px;line-height:24px;font-size:12px;color:#ff40ff;white-space:pre;transform:scaleY(0.93);font-family:'DejaVu Sans Mono','Liberation Mono',monospace;font-weight:bold;left:218.60px;text-shadow:0 0 1px #ff40ff;">@</div>
<div style="top:220.50px;height:20px;line-height:20px;font-size:10px;color:#000;white-space:pre;transform:scaleY(0.93);font-family:'DejaVu Sans Mono','Liberation Mono',monospace;left:226.92px;">   218M     51   218M     51 types.FrameType</div>
<div style="top:232.40px;height:24px;line-height:24px;font-size:12px;color:#000000;white-space:pre;transform:scaleY(0.93);font-family:'DejaVu Sans Mono','Liberation Mono',monospace;font-weight:bold;left:218.60px;text-shadow:0 0 1px #000000;">@</div>
<div style="top:235.10px;height:20px;line-height:20px;font-size:10px;color:#000;white-space:pre;transform:scaleY(0.93);font-family:'DejaVu Sans Mono','Liberation Mono',monospace;left:226.92px;"> 55454K     13   273M     64 &lt;Other&gt;</div>
<div style="top:247.00px;height:24px;line-height:24px;font-size:12px;color:#ffffff;white-space:pre;transform:scaleY(0.93);font-family:'DejaVu Sans Mono','Liberation Mono',monospace;font-weight:bold;left:218.60px;text-shadow:0 0 1px #ffffff;">@</div>
<div style="top:249.70px;height:20px;line-height:20px;font-size:10px;color:#000;white-space:pre;transform:scaleY(0.93);font-family:'DejaVu Sans Mono','Liberation Mono',monospace;left:226.92px;"> 29697K    6.9   303M     71 types.TracebackType</div>
<div style="top:261.40px;height:24px;line-height:24px;font-size:12px;color:#2020ff;white-space:pre;transform:scaleY(0.93);font-family:'DejaVu Sans Mono','Liberation Mono',monospace;font-weight:bold;left:218.60px;text-shadow:0 0 1px #2020ff;">@</div>
<div style="top:264.10px;height:20px;line-height:20px;font-size:10px;color:#000;white-space:pre;transform:scaleY(0.93);font-family:'DejaVu Sans Mono','Liberation Mono',monospace;left:226.92px;"> 29453K    6.9   332M     78 tuple</div>
<div style="top:275.70px;height:24px;line-height:24px;font-size:12px;color:#30f0f0;white-space:pre;transform:scaleY(0.93);font-family:'DejaVu Sans Mono','Liberation Mono',monospace;font-weight:bold;left:218.60px;text-shadow:0 0 1px #30f0f0;">@</div>
<div style="top:278.40px;height:20px;line-height:20px;font-size:10px;color:#000;white-space:pre;transform:scaleY(0.93);font-family:'DejaVu Sans Mono','Liberation Mono',monospace;left:226.92px;"> 28694K    6.7   361M     84 set</div>
<div style="top:290.30px;height:24px;line-height:24px;font-size:12px;color:#ffff40;white-space:pre;transform:scaleY(0.93);font-family:'DejaVu Sans Mono','Liberation Mono',monospace;font-weight:bold;left:218.60px;text-shadow:0 0 1px #ffff40;">@</div>
<div style="top:293.00px;height:20px;line-height:20px;font-size:10px;color:#000;white-space:pre;transform:scaleY(0.93);font-family:'DejaVu Sans Mono','Liberation Mono',monospace;left:226.92px;"> 21055K    4.9   382M     89 dict (no owner)</div>
<div style="top:304.80px;height:24px;line-height:24px;font-size:12px;color:#ffffff;white-space:pre;transform:scaleY(0.93);font-family:'DejaVu Sans Mono','Liberation Mono',monospace;font-weight:bold;left:218.60px;text-shadow:0 0 1px #ffffff;">@</div>
<div style="top:307.50px;height:20px;line-height:20px;font-size:10px;color:#000;white-space:pre;transform:scaleY(0.93);font-family:'DejaVu Sans Mono','Liberation Mono',monospace;left:226.92px;"> 15618K    3.6   398M     93 list</div>
<div style="top:319.40px;height:24px;line-height:24px;font-size:12px;color:#ff2020;white-space:pre;transform:scaleY(0.93);font-family:'DejaVu Sans Mono','Liberation Mono',monospace;font-weight:bold;left:218.60px;text-shadow:0 0 1px #ff2020;">@</div>
<div style="top:322.10px;height:20px;line-height:20px;font-size:10px;color:#000;white-space:pre;transform:scaleY(0.93);font-family:'DejaVu Sans Mono','Liberation Mono',monospace;left:226.92px;">  9823K    2.3   408M     95 str</div>
<div style="top:334.00px;height:24px;line-height:24px;font-size:12px;color:#109010;white-space:pre;transform:scaleY(0.93);font-family:'DejaVu Sans Mono','Liberation Mono',monospace;font-weight:bold;left:218.60px;text-shadow:0 0 1px #109010;">@</div>
<div style="top:336.70px;height:20px;line-height:20px;font-size:10px;color:#000;white-space:pre;transform:scaleY(0.93);font-family:'DejaVu Sans Mono','Liberation Mono',monospace;left:226.92px;">  9112K    2.1   417M     97 dict of</div>
<div style="top:349.20px;height:20px;line-height:20px;font-size:10px;color:#000;white-space:pre;transform:scaleY(0.93);font-family:'DejaVu Sans Mono','Liberation Mono',monospace;left:399.50px;">astroid.node_classes.Name</div>
<div style="top:360.60px;height:24px;line-height:24px;font-size:12px;color:#ffffff;white-space:pre;transform:scaleY(0.93);font-family:'DejaVu Sans Mono','Liberation Mono',monospace;font-weight:bold;left:218.60px;text-shadow:0 0 1px #ffffff;">@</div>
<div style="top:363.30px;height:20px;line-height:20px;font-size:10px;color:#000;white-space:pre;transform:scaleY(0.93);font-family:'DejaVu Sans Mono','Liberation Mono',monospace;left:226.92px;">  6673K    1.6   423M     99 tokenize.TokenInfo</div>
<div style="top:375.20px;height:24px;line-height:24px;font-size:12px;color:#ff40ff;white-space:pre;transform:scaleY(0.93);font-family:'DejaVu Sans Mono','Liberation Mono',monospace;font-weight:bold;left:218.60px;text-shadow:0 0 1px #ff40ff;">@</div>
<div style="top:377.90px;height:20px;line-height:20px;font-size:10px;color:#000;white-space:pre;transform:scaleY(0.93);font-family:'DejaVu Sans Mono','Liberation Mono',monospace;left:226.92px;">  5370K    1.3   429M    100 dict of</div>
<div style="top:390.50px;height:20px;line-height:20px;font-size:10px;color:#000;white-space:pre;transform:scaleY(0.93);font-family:'DejaVu Sans Mono','Liberation Mono',monospace;left:399.50px;">astroid.node_classes.Const</div>
</div>
<div id="R">
<svg style="left:0;top:0" width="711" height="738" viewBox="0 0 711 738">
<rect x="-2.00" y="-10.00" width="715.60" height="20.25" fill="#3a3a3a"/>
<rect x="1.00" y="10.25" width="712.60" height="1.40" fill="#f2f2f2"/>
<rect x="669.20" y="2.00" width="4.00" height="1.00" fill="#7a7a7a"/>
<rect x="686.40" y="-0.40" width="3.6" height="4.2" fill="none" stroke="#7d7d7d" stroke-width="0.9"/>
<circle cx="705.80" cy="1.50" r="4.8" fill="#585858"/><path transform="translate(705.80,1.50)" d="M-1.9 -1.9 L1.9 1.9 M1.9 -1.9 L-1.9 1.9" stroke="#dedede" stroke-width="1.2"/>
<rect x="1.00" y="31.40" width="711.60" height="1.00" fill="#8a8a8a"/>
<rect x="1.00" y="32.40" width="711.60" height="0.90" fill="#e4e4e4"/>
<rect x="0.00" y="35.10" width="339.60" height="0.90" fill="#c0c0c0"/>
<rect x="0.00" y="35.10" width="0.90" height="99.40" fill="#c0c0c0"/>
<rect x="0.90" y="36.00" width="337.80" height="0.90" fill="#f0f0f0"/>
<rect x="0.90" y="36.00" width="0.90" height="97.60" fill="#f0f0f0"/>
<rect x="0.00" y="133.60" width="339.60" height="0.90" fill="#f0f0f0"/>
<rect x="338.70" y="35.10" width="0.90" height="99.40" fill="#f0f0f0"/>
<rect x="0.90" y="132.70" width="337.80" height="0.90" fill="#c0c0c0"/>
<rect x="337.80" y="36.00" width="0.90" height="97.60" fill="#c0c0c0"/>
<rect x="4.20" y="37.50" width="108.80" height="0.90" fill="#c0c0c0"/>
<rect x="4.20" y="37.50" width="0.90" height="44.80" fill="#c0c0c0"/>
<rect x="5.10" y="38.40" width="107.00" height="0.90" fill="#f0f0f0"/>
<rect x="5.10" y="38.40" width="0.90" height="43.00" fill="#f0f0f0"/>
<rect x="4.20" y="81.40" width="108.80" height="0.90" fill="#f0f0f0"/>
<rect x="112.10" y="37.50" width="0.90" height="44.80" fill="#f0f0f0"/>
<rect x="5.10" y="80.50" width="107.00" height="0.90" fill="#c0c0c0"/>
<rect x="111.20" y="38.40" width="0.90" height="43.00" fill="#c0c0c0"/>
<rect x="7.30" y="39.20" width="16.70" height="19.00" fill="#d9d9d9"/>
<rect x="7.30" y="39.20" width="16.70" height="1.00" fill="#f8f8f8"/>
<rect x="7.30" y="39.20" width="1.00" height="19.00" fill="#f8f8f8"/>
<rect x="7.30" y="57.20" width="16.70" height="1.00" fill="#9a9a9a"/>
<rect x="23.00" y="39.20" width="1.00" height="19.00" fill="#9a9a9a"/>
<rect x="90.60" y="42.20" width="8.00" height="13.60" fill="#d9d9d9"/>
<rect x="90.60" y="42.20" width="8.00" height="1.00" fill="#f8f8f8"/>
<rect x="90.60" y="42.20" width="1.00" height="13.60" fill="#f8f8f8"/>
<rect x="90.60" y="54.80" width="8.00" height="1.00" fill="#9a9a9a"/>
<rect x="97.60" y="42.20" width="1.00" height="13.60" fill="#9a9a9a"/>
<rect x="99.80" y="42.20" width="10.80" height="13.60" fill="#d9d9d9"/>
<rect x="99.80" y="42.20" width="10.80" height="1.00" fill="#f8f8f8"/>
<rect x="99.80" y="42.20" width="1.00" height="13.60" fill="#f8f8f8"/>
<rect x="99.80" y="54.80" width="10.80" height="1.00" fill="#9a9a9a"/>
<rect x="109.60" y="42.20" width="1.00" height="13.60" fill="#9a9a9a"/>
<rect x="6.70" y="64.60" width="39.60" height="13.00" fill="#d9d9d9"/>
<rect x="6.70" y="64.60" width="39.60" height="1.00" fill="#f8f8f8"/>
<rect x="6.70" y="64.60" width="1.00" height="13.00" fill="#f8f8f8"/>
<rect x="6.70" y="76.60" width="39.60" height="1.00" fill="#9a9a9a"/>
<rect x="45.30" y="64.60" width="1.00" height="13.00" fill="#9a9a9a"/>
<rect x="13.30" y="68.20" width="5.70" height="5.70" fill="#d0d0d0"/>
<rect x="13.80" y="68.70" width="5.20" height="5.20" fill="#ffffff"/>
<rect x="48.80" y="62.10" width="38.20" height="18.30" fill="#ffdddd"/>
<rect x="48.80" y="62.10" width="38.20" height="0.80" fill="#ecd0d0"/>
<rect x="48.80" y="62.10" width="0.80" height="18.30" fill="#ecd0d0"/>
<rect x="48.80" y="79.60" width="38.20" height="0.80" fill="#fff4f4"/>
<rect x="86.20" y="62.10" width="0.80" height="18.30" fill="#fff4f4"/>
<rect x="4.20" y="87.30" width="128.20" height="0.90" fill="#c0c0c0"/>
<rect x="4.20" y="87.30" width="0.90" height="44.70" fill="#c0c0c0"/>
<rect x="5.10" y="88.20" width="126.40" height="0.90" fill="#f0f0f0"/>
<rect x="5.10" y="88.20" width="0.90" height="42.90" fill="#f0f0f0"/>
<rect x="4.20" y="131.10" width="128.20" height="0.90" fill="#f0f0f0"/>
<rect x="131.50" y="87.30" width="0.90" height="44.70" fill="#f0f0f0"/>
<rect x="5.10" y="130.20" width="126.40" height="0.90" fill="#c0c0c0"/>
<rect x="130.60" y="88.20" width="0.90" height="42.90" fill="#c0c0c0"/>
<rect x="7.30" y="89.30" width="14.80" height="18.60" fill="#d9d9d9"/>
<rect x="7.30" y="89.30" width="14.80" height="1.00" fill="#f8f8f8"/>
<rect x="7.30" y="89.30" width="1.00" height="18.60" fill="#f8f8f8"/>
<rect x="7.30" y="106.90" width="14.80" height="1.00" fill="#9a9a9a"/>
<rect x="21.10" y="89.30" width="1.00" height="18.60" fill="#9a9a9a"/>
<rect x="100.50" y="91.50" width="7.40" height="13.50" fill="#d9d9d9"/>
<rect x="100.50" y="91.50" width="7.40" height="1.00" fill="#f8f8f8"/>
<rect x="100.50" y="91.50" width="1.00" height="13.50" fill="#f8f8f8"/>
<rect x="100.50" y="104.00" width="7.40" height="1.00" fill="#9a9a9a"/>
<rect x="106.90" y="91.50" width="1.00" height="13.50" fill="#9a9a9a"/>
<rect x="109.40" y="91.50" width="10.80" height="13.50" fill="#d9d9d9"/>
<rect x="109.40" y="91.50" width="10.80" height="1.00" fill="#f8f8f8"/>
<rect x="109.40" y="91.50" width="1.00" height="13.50" fill="#f8f8f8"/>
<rect x="109.40" y="104.00" width="10.80" height="1.00" fill="#9a9a9a"/>
<rect x="119.20" y="91.50" width="1.00" height="13.50" fill="#9a9a9a"/>
<rect x="6.70" y="114.00" width="39.60" height="13.30" fill="#d9d9d9"/>
<rect x="6.70" y="114.00" width="39.60" height="1.00" fill="#f8f8f8"/>
<rect x="6.70" y="114.00" width="1.00" height="13.30" fill="#f8f8f8"/>
<rect x="6.70" y="126.30" width="39.60" height="1.00" fill="#9a9a9a"/>
<rect x="45.30" y="114.00" width="1.00" height="13.30" fill="#9a9a9a"/>
<rect x="13.30" y="117.80" width="5.70" height="5.70" fill="#d0d0d0"/>
<rect x="13.80" y="118.30" width="5.20" height="5.20" fill="#ffffff"/>
<rect x="48.80" y="112.00" width="38.20" height="18.30" fill="#ffdddd"/>
<rect x="48.80" y="112.00" width="38.20" height="0.80" fill="#ecd0d0"/>
<rect x="48.80" y="112.00" width="0.80" height="18.30" fill="#ecd0d0"/>
<rect x="48.80" y="129.50" width="38.20" height="0.80" fill="#fff4f4"/>
<rect x="86.20" y="112.00" width="0.80" height="18.30" fill="#fff4f4"/>
<rect x="90.30" y="113.40" width="40.20" height="14.60" fill="#d9d9d9"/>
<rect x="90.30" y="113.40" width="40.20" height="1.00" fill="#f8f8f8"/>
<rect x="90.30" y="113.40" width="1.00" height="14.60" fill="#f8f8f8"/>
<rect x="90.30" y="127.00" width="40.20" height="1.00" fill="#9a9a9a"/>
<rect x="129.50" y="113.40" width="1.00" height="14.60" fill="#9a9a9a"/>
<rect x="95.60" y="117.80" width="5.70" height="5.70" fill="#d0d0d0"/>
<rect x="96.10" y="118.30" width="5.20" height="5.20" fill="#f0f0f0"/>
<path transform="translate(96.10,118.30)" d="M0.9 2.6 L2.2 4.0 L4.5 1.1" fill="none" stroke="#111" stroke-width="1.35"/>
<rect x="135.50" y="39.30" width="100.00" height="0.90" fill="#c0c0c0"/>
<rect x="135.50" y="39.30" width="0.90" height="40.80" fill="#c0c0c0"/>
<rect x="136.40" y="40.20" width="98.20" height="0.90" fill="#f0f0f0"/>
<rect x="136.40" y="40.20" width="0.90" height="39.00" fill="#f0f0f0"/>
<rect x="135.50" y="79.20" width="100.00" height="0.90" fill="#f0f0f0"/>
<rect x="234.60" y="39.30" width="0.90" height="40.80" fill="#f0f0f0"/>
<rect x="136.40" y="78.30" width="98.20" height="0.90" fill="#c0c0c0"/>
<rect x="233.70" y="40.20" width="0.90" height="39.00" fill="#c0c0c0"/>
<rect x="197.00" y="41.60" width="9.30" height="12.70" fill="#d9d9d9"/>
<rect x="197.00" y="41.60" width="9.30" height="1.00" fill="#f8f8f8"/>
<rect x="197.00" y="41.60" width="1.00" height="12.70" fill="#f8f8f8"/>
<rect x="197.00" y="53.30" width="9.30" height="1.00" fill="#9a9a9a"/>
<rect x="205.30" y="41.60" width="1.00" height="12.70" fill="#9a9a9a"/>
<rect x="208.30" y="41.60" width="15.30" height="12.70" fill="#d9d9d9"/>
<rect x="208.30" y="41.60" width="15.30" height="1.00" fill="#f8f8f8"/>
<rect x="208.30" y="41.60" width="1.00" height="12.70" fill="#f8f8f8"/>
<rect x="208.30" y="53.30" width="15.30" height="1.00" fill="#9a9a9a"/>
<rect x="222.60" y="41.60" width="1.00" height="12.70" fill="#9a9a9a"/>
<rect x="154.70" y="57.20" width="11.40" height="20.10" fill="#000"/>
<rect x="185.30" y="60.70" width="49.50" height="13.40" fill="#d9d9d9"/>
<rect x="185.30" y="60.70" width="49.50" height="1.00" fill="#f8f8f8"/>
<rect x="185.30" y="60.70" width="1.00" height="13.40" fill="#f8f8f8"/>
<rect x="185.30" y="73.10" width="49.50" height="1.00" fill="#9a9a9a"/>
<rect x="233.80" y="60.70" width="1.00" height="13.40" fill="#9a9a9a"/>
<rect x="193.20" y="64.40" width="5.70" height="5.70" fill="#d0d0d0"/>
<rect x="193.70" y="64.90" width="5.20" height="5.20" fill="#f0f0f0"/>
<path transform="translate(193.70,64.90)" d="M0.9 2.6 L2.2 4.0 L4.5 1.1" fill="none" stroke="#111" stroke-width="1.35"/>
<rect x="240.00" y="50.30" width="40.30" height="19.30" fill="#ff0000"/>
<rect x="285.00" y="53.30" width="52.00" height="13.40" fill="#d9d9d9"/>
<rect x="285.00" y="53.30" width="52.00" height="1.00" fill="#f8f8f8"/>
<rect x="285.00" y="53.30" width="1.00" height="13.40" fill="#f8f8f8"/>
<rect x="285.00" y="65.70" width="52.00" height="1.00" fill="#9a9a9a"/>
<rect x="336.00" y="53.30" width="1.00" height="13.40" fill="#9a9a9a"/>
<rect x="291.10" y="57.00" width="5.70" height="5.70" fill="#d0d0d0"/>
<rect x="291.60" y="57.50" width="5.20" height="5.20" fill="#ffffff"/>
<rect x="135.50" y="88.80" width="100.00" height="0.90" fill="#c0c0c0"/>
<rect x="135.50" y="88.80" width="0.90" height="40.30" fill="#c0c0c0"/>
<rect x="136.40" y="89.70" width="98.20" height="0.90" fill="#f0f0f0"/>
<rect x="136.40" y="89.70" width="0.90" height="38.50" fill="#f0f0f0"/>
<rect x="135.50" y="128.20" width="100.00" height="0.90" fill="#f0f0f0"/>
<rect x="234.60" y="88.80" width="0.90" height="40.30" fill="#f0f0f0"/>
<rect x="136.40" y="127.30" width="98.20" height="0.90" fill="#c0c0c0"/>
<rect x="233.70" y="89.70" width="0.90" height="38.50" fill="#c0c0c0"/>
<rect x="197.00" y="91.50" width="9.30" height="12.70" fill="#d9d9d9"/>
<rect x="197.00" y="91.50" width="9.30" height="1.00" fill="#f8f8f8"/>
<rect x="197.00" y="91.50" width="1.00" height="12.70" fill="#f8f8f8"/>
<rect x="197.00" y="103.20" width="9.30" height="1.00" fill="#9a9a9a"/>
<rect x="205.30" y="91.50" width="1.00" height="12.70" fill="#9a9a9a"/>
<rect x="208.30" y="91.50" width="15.30" height="12.70" fill="#d9d9d9"/>
<rect x="208.30" y="91.50" width="15.30" height="1.00" fill="#f8f8f8"/>
<rect x="208.30" y="91.50" width="1.00" height="12.70" fill="#f8f8f8"/>
<rect x="208.30" y="103.20" width="15.30" height="1.00" fill="#9a9a9a"/>
<rect x="222.60" y="91.50" width="1.00" height="12.70" fill="#9a9a9a"/>
<rect x="154.70" y="106.70" width="11.40" height="20.60" fill="#000"/>
<rect x="185.30" y="110.50" width="49.50" height="13.40" fill="#d9d9d9"/>
<rect x="185.30" y="110.50" width="49.50" height="1.00" fill="#f8f8f8"/>
<rect x="185.30" y="110.50" width="1.00" height="13.40" fill="#f8f8f8"/>
<rect x="185.30" y="122.90" width="49.50" height="1.00" fill="#9a9a9a"/>
<rect x="233.80" y="110.50" width="1.00" height="13.40" fill="#9a9a9a"/>
<rect x="193.20" y="114.20" width="5.70" height="5.70" fill="#d0d0d0"/>
<rect x="193.70" y="114.70" width="5.20" height="5.20" fill="#ffffff"/>
<rect x="33.20" y="143.00" width="224.60" height="6.80" fill="#b4b4b4"/>
<rect x="87.00" y="143.00" width="110.50" height="6.80" fill="#d3d3d3"/>
<rect x="87.00" y="143.00" width="0.90" height="6.80" fill="#f0f0f0"/>
<rect x="196.60" y="143.00" width="0.90" height="6.80" fill="#a0a0a0"/>
<path transform="translate(33.20,143.00)" d="M0.8 3.4 L6.3 0.7 L6.3 6.1 Z" fill="#cdcdcd" stroke="#ececec" stroke-width="0.7"/>
<path transform="translate(250.60,143.00)" d="M6.4 3.4 L0.9 0.7 L0.9 6.1 Z" fill="#cdcdcd" stroke="#ececec" stroke-width="0.7"/>
<rect x="4.00" y="150.30" width="254.80" height="3.20" fill="#e0e0e0"/>
<rect x="4.00" y="153.50" width="26.60" height="10.90" fill="#d2d2d2"/>
<rect x="30.60" y="153.50" width="14.90" height="10.90" fill="#d8d8d8"/>
<rect x="55.30" y="153.50" width="192.20" height="10.90" fill="#c9c9c9"/>
<rect x="45.30" y="153.50" width="10.00" height="10.90" fill="#e4e4e4"/>
<rect x="55.10" y="153.50" width="0.90" height="10.90" fill="#a6a6a6"/>
<rect x="247.50" y="153.50" width="11.30" height="10.90" fill="#e4e4e4"/>
<rect x="4.00" y="165.00" width="26.60" height="565.80" fill="#cdcdcd"/>
<rect x="30.60" y="165.00" width="228.20" height="565.80" fill="#e2e2e2"/>
<rect x="30.20" y="167.50" width="1.60" height="562.30" fill="#858585"/>
<rect x="29.10" y="729.30" width="1.30" height="1.00" fill="#777"/>
<rect x="29.10" y="701.11" width="1.30" height="1.00" fill="#777"/>
<rect x="29.10" y="672.92" width="1.30" height="1.00" fill="#777"/>
<rect x="29.10" y="644.73" width="1.30" height="1.00" fill="#777"/>
<rect x="29.10" y="616.54" width="1.30" height="1.00" fill="#777"/>
<rect x="29.10" y="588.35" width="1.30" height="1.00" fill="#777"/>
<rect x="29.10" y="560.16" width="1.30" height="1.00" fill="#777"/>
<rect x="29.10" y="531.97" width="1.30" height="1.00" fill="#777"/>
<rect x="29.10" y="503.78" width="1.30" height="1.00" fill="#777"/>
<rect x="29.10" y="475.59" width="1.30" height="1.00" fill="#777"/>
<rect x="29.10" y="447.40" width="1.30" height="1.00" fill="#777"/>
<rect x="29.10" y="419.21" width="1.30" height="1.00" fill="#777"/>
<rect x="29.10" y="391.02" width="1.30" height="1.00" fill="#777"/>
<rect x="29.10" y="362.83" width="1.30" height="1.00" fill="#777"/>
<rect x="29.10" y="334.64" width="1.30" height="1.00" fill="#777"/>
<rect x="29.10" y="306.45" width="1.30" height="1.00" fill="#777"/>
<rect x="29.10" y="278.26" width="1.30" height="1.00" fill="#777"/>
<rect x="29.10" y="250.07" width="1.30" height="1.00" fill="#777"/>
<rect x="29.10" y="221.88" width="1.30" height="1.00" fill="#777"/>
<rect x="29.10" y="193.69" width="1.30" height="1.00" fill="#777"/>
<line x1="50.50" y1="167.00" x2="50.50" y2="729.80" stroke="#909090" stroke-width="1.2" stroke-dasharray="1 1"/>
<line x1="252.90" y1="167.00" x2="252.90" y2="729.80" stroke="#909090" stroke-width="1.2" stroke-dasharray="1 1"/>
<rect x="40.40" y="617.60" width="20.40" height="36.60" fill="#000000"/>
<rect x="40.40" y="654.20" width="20.40" height="16.10" fill="#ffffff"/>
<rect x="40.40" y="670.30" width="20.40" height="15.30" fill="#ff0000"/>
<rect x="40.40" y="685.60" width="20.40" height="12.00" fill="#ffff00"/>
<rect x="40.40" y="697.60" width="20.40" height="8.20" fill="#0000ff"/>
<rect x="40.40" y="705.80" width="20.40" height="4.60" fill="#008000"/>
<rect x="40.40" y="710.40" width="20.40" height="0.80" fill="#000000"/>
<rect x="40.40" y="711.20" width="20.40" height="4.00" fill="#008000"/>
<rect x="40.40" y="715.20" width="20.40" height="4.10" fill="#ffff00"/>
<rect x="40.40" y="719.30" width="20.40" height="0.80" fill="#000000"/>
<rect x="40.40" y="720.10" width="20.40" height="2.40" fill="#ffff00"/>
<rect x="40.40" y="722.50" width="20.40" height="4.10" fill="#ff00ff"/>
<rect x="40.40" y="726.60" width="20.40" height="3.10" fill="#ff0000"/>
<rect x="62.90" y="559.30" width="20.40" height="64.00" fill="#000000"/>
<rect x="62.90" y="623.30" width="20.40" height="24.60" fill="#ffffff"/>
<rect x="62.90" y="647.90" width="20.40" height="16.80" fill="#ffff00"/>
<rect x="62.90" y="664.70" width="20.40" height="17.30" fill="#ff0000"/>
<rect x="62.90" y="682.00" width="20.40" height="11.70" fill="#008000"/>
<rect x="62.90" y="693.70" width="20.40" height="10.20" fill="#0000ff"/>
<rect x="62.90" y="703.90" width="20.40" height="6.30" fill="#ff00ff"/>
<rect x="62.90" y="710.20" width="20.40" height="5.00" fill="#ff0000"/>
<rect x="62.90" y="715.20" width="20.40" height="4.80" fill="#0000ff"/>
<rect x="62.90" y="720.00" width="20.40" height="4.40" fill="#008000"/>
<rect x="62.90" y="724.40" width="20.40" height="5.30" fill="#ffffff"/>
<rect x="85.10" y="538.30" width="20.40" height="72.20" fill="#000000"/>
<rect x="85.10" y="610.50" width="20.40" height="27.60" fill="#ffffff"/>
<rect x="85.10" y="638.10" width="20.40" height="18.50" fill="#ffff00"/>
<rect x="85.10" y="656.60" width="20.40" height="17.30" fill="#ff0000"/>
<rect x="85.10" y="673.90" width="20.40" height="14.70" fill="#008000"/>
<rect x="85.10" y="688.60" width="20.40" height="10.50" fill="#0000ff"/>
<rect x="85.10" y="699.10" width="20.40" height="7.80" fill="#ff00ff"/>
<rect x="85.10" y="706.90" width="20.40" height="5.80" fill="#0000ff"/>
<rect x="85.10" y="712.70" width="20.40" height="5.90" fill="#ff0000"/>
<rect x="85.10" y="718.60" width="20.40" height="5.60" fill="#ffffff"/>
<rect x="85.10" y="724.20" width="20.40" height="0.60" fill="#9a9a9a"/>
<rect x="85.10" y="724.80" width="20.40" height="4.90" fill="#ffffff"/>
<rect x="107.60" y="485.60" width="20.40" height="91.50" fill="#000000"/>
<rect x="107.60" y="577.10" width="20.40" height="33.40" fill="#ffffff"/>
<rect x="107.60" y="610.50" width="20.40" height="24.00" fill="#ffff00"/>
<rect x="107.60" y="634.50" width="20.40" height="21.10" fill="#008000"/>
<rect x="107.60" y="655.60" width="20.40" height="18.30" fill="#ff0000"/>
<rect x="107.60" y="673.90" width="20.40" height="13.90" fill="#0000ff"/>
<rect x="107.60" y="687.80" width="20.40" height="12.20" fill="#ff00ff"/>
<rect x="107.60" y="700.00" width="20.40" height="8.30" fill="#0000ff"/>
<rect x="107.60" y="708.30" width="20.40" height="7.60" fill="#ff0000"/>
<rect x="107.60" y="715.90" width="20.40" height="7.10" fill="#ffffff"/>
<rect x="107.60" y="723.00" width="20.40" height="0.70" fill="#000000"/>
<rect x="107.60" y="723.70" width="20.40" height="6.00" fill="#ffffff"/>
<rect x="130.10" y="468.10" width="20.40" height="97.50" fill="#000000"/>
<rect x="130.10" y="565.60" width="20.40" height="36.10" fill="#ffffff"/>
<rect x="130.10" y="601.70" width="20.40" height="24.90" fill="#ffff00"/>
<rect x="130.10" y="626.60" width="20.40" height="23.20" fill="#008000"/>
<rect x="130.10" y="649.80" width="20.40" height="19.40" fill="#ff0000"/>
<rect x="130.10" y="669.20" width="20.40" height="14.70" fill="#0000ff"/>
<rect x="130.10" y="683.90" width="20.40" height="12.70" fill="#ff00ff"/>
<rect x="130.10" y="696.60" width="20.40" height="9.50" fill="#0000ff"/>
<rect x="130.10" y="706.10" width="20.40" height="8.40" fill="#ffffff"/>
<rect x="130.10" y="714.50" width="20.40" height="7.40" fill="#ff0000"/>
<rect x="130.10" y="721.90" width="20.40" height="7.80" fill="#00ffff"/>
<rect x="152.60" y="461.50" width="20.40" height="99.50" fill="#000000"/>
<rect x="152.60" y="561.00" width="20.40" height="37.10" fill="#ffffff"/>
<rect x="152.60" y="598.10" width="20.40" height="24.90" fill="#ffff00"/>
<rect x="152.60" y="623.00" width="20.40" height="24.90" fill="#008000"/>
<rect x="152.60" y="647.90" width="20.40" height="18.70" fill="#ff0000"/>
<rect x="152.60" y="666.60" width="20.40" height="15.40" fill="#0000ff"/>
<rect x="152.60" y="682.00" width="20.40" height="13.90" fill="#ff00ff"/>
<rect x="152.60" y="695.90" width="20.40" height="9.80" fill="#0000ff"/>
<rect x="152.60" y="705.70" width="20.40" height="8.00" fill="#ffffff"/>
<rect x="152.60" y="713.70" width="20.40" height="7.80" fill="#ff0000"/>
<rect x="152.60" y="721.50" width="20.40" height="8.20" fill="#00ffff"/>
<rect x="175.00" y="459.60" width="20.40" height="100.40" fill="#000000"/>
<rect x="175.00" y="560.00" width="20.40" height="36.90" fill="#ffffff"/>
<rect x="175.00" y="596.90" width="20.40" height="25.10" fill="#ffff00"/>
<rect x="175.00" y="622.00" width="20.40" height="24.40" fill="#008000"/>
<rect x="175.00" y="646.40" width="20.40" height="19.50" fill="#ff0000"/>
<rect x="175.00" y="665.90" width="20.40" height="15.60" fill="#0000ff"/>
<rect x="175.00" y="681.50" width="20.40" height="14.10" fill="#ff00ff"/>
<rect x="175.00" y="695.60" width="20.40" height="9.50" fill="#0000ff"/>
<rect x="175.00" y="705.10" width="20.40" height="8.60" fill="#ffffff"/>
<rect x="175.00" y="713.70" width="20.40" height="7.80" fill="#00ffff"/>
<rect x="175.00" y="721.50" width="20.40" height="8.20" fill="#ff0000"/>
<rect x="197.30" y="456.10" width="20.40" height="101.00" fill="#000000"/>
<rect x="197.30" y="557.10" width="20.40" height="38.10" fill="#ffffff"/>
<rect x="197.30" y="595.20" width="20.40" height="25.60" fill="#ffff00"/>
<rect x="197.30" y="620.80" width="20.40" height="24.60" fill="#008000"/>
<rect x="197.30" y="645.40" width="20.40" height="19.40" fill="#ff0000"/>
<rect x="197.30" y="664.80" width="20.40" height="16.40" fill="#0000ff"/>
<rect x="197.30" y="681.20" width="20.40" height="14.20" fill="#ff00ff"/>
<rect x="197.30" y="695.40" width="20.40" height="9.70" fill="#0000ff"/>
<rect x="197.30" y="705.10" width="20.40" height="8.40" fill="#ffffff"/>
<rect x="197.30" y="713.50" width="20.40" height="7.70" fill="#00ffff"/>
<rect x="197.30" y="721.20" width="20.40" height="8.50" fill="#ff0000"/>
<rect x="219.90" y="452.40" width="20.40" height="102.20" fill="#000000"/>
<rect x="219.90" y="554.60" width="20.40" height="38.70" fill="#ffffff"/>
<rect x="219.90" y="593.30" width="20.40" height="26.00" fill="#ffff00"/>
<rect x="219.90" y="619.30" width="20.40" height="24.60" fill="#008000"/>
<rect x="219.90" y="643.90" width="20.40" height="20.10" fill="#ff0000"/>
<rect x="219.90" y="664.00" width="20.40" height="16.50" fill="#0000ff"/>
<rect x="219.90" y="680.50" width="20.40" height="14.40" fill="#ff00ff"/>
<rect x="219.90" y="694.90" width="20.40" height="9.80" fill="#0000ff"/>
<rect x="219.90" y="704.70" width="20.40" height="8.80" fill="#ffffff"/>
<rect x="219.90" y="713.50" width="20.40" height="7.70" fill="#00ffff"/>
<rect x="219.90" y="721.20" width="20.40" height="8.50" fill="#ff0000"/>
<rect x="242.20" y="444.30" width="16.10" height="104.70" fill="#000000"/>
<rect x="242.20" y="549.00" width="16.10" height="39.30" fill="#ffffff"/>
<rect x="242.20" y="588.30" width="16.10" height="26.30" fill="#ffff00"/>
<rect x="242.20" y="614.60" width="16.10" height="25.40" fill="#008000"/>
<rect x="242.20" y="640.00" width="16.10" height="20.00" fill="#ff0000"/>
<rect x="242.20" y="660.00" width="16.10" height="18.60" fill="#0000ff"/>
<rect x="242.20" y="678.60" width="16.10" height="15.40" fill="#ff00ff"/>
<rect x="242.20" y="694.00" width="16.10" height="10.20" fill="#0000ff"/>
<rect x="242.20" y="704.20" width="16.10" height="8.50" fill="#ffffff"/>
<rect x="242.20" y="712.70" width="16.10" height="8.50" fill="#00ffff"/>
<rect x="242.20" y="721.20" width="16.10" height="8.50" fill="#ff0000"/>
<line x1="50.50" y1="167.00" x2="50.50" y2="729.80" stroke="#000" stroke-opacity="0.16" stroke-width="1" stroke-dasharray="1 1"/>
<line x1="252.90" y1="167.00" x2="252.90" y2="729.80" stroke="#000" stroke-opacity="0.16" stroke-width="1" stroke-dasharray="1 1"/>
<rect x="4.00" y="730.80" width="254.80" height="11.00" fill="#d0d0d0"/>
<rect x="4.00" y="730.80" width="26.20" height="11.00" fill="#d6d6d6"/>
<rect x="4.00" y="730.40" width="24.60" height="0.90" fill="#8a8a8a"/>
<rect x="50.10" y="730.80" width="208.70" height="0.90" fill="#777"/>
<rect x="50.10" y="730.80" width="1.00" height="1.90" fill="#555"/>
<rect x="72.60" y="730.80" width="1.00" height="1.90" fill="#555"/>
<rect x="94.80" y="730.80" width="1.00" height="1.90" fill="#555"/>
<rect x="117.30" y="730.80" width="1.00" height="1.90" fill="#555"/>
<rect x="139.80" y="730.80" width="1.00" height="1.90" fill="#555"/>
<rect x="162.30" y="730.80" width="1.00" height="1.90" fill="#555"/>
<rect x="184.70" y="730.80" width="1.00" height="1.90" fill="#555"/>
<rect x="207.00" y="730.80" width="1.00" height="1.90" fill="#555"/>
<rect x="229.60" y="730.80" width="1.00" height="1.90" fill="#555"/>
<rect x="251.90" y="730.80" width="1.00" height="1.90" fill="#555"/>
<rect x="2.90" y="138.55" width="256.10" height="1.20" fill="#808080"/>
<rect x="2.90" y="139.10" width="1.10" height="634.60" fill="#808080"/>
<rect x="258.80" y="139.70" width="1.60" height="634.60" fill="#fafafa"/>
<rect x="270.60" y="139.70" width="439.20" height="26.20" fill="#d1d1d1"/>
<rect x="270.60" y="165.70" width="439.20" height="2.60" fill="#d6d6d6"/>
<rect x="270.60" y="168.20" width="439.20" height="12.90" fill="#cbcbcb"/>
<rect x="270.60" y="181.10" width="439.20" height="592.60" fill="#e0e0e0"/>
<rect x="269.40" y="138.55" width="441.60" height="1.20" fill="#808080"/>
<rect x="269.40" y="139.10" width="1.20" height="634.60" fill="#808080"/>
<rect x="709.80" y="139.70" width="3.20" height="634.60" fill="#fafafa"/>
<rect x="333.50" y="142.30" width="6.80" height="11.40" fill="#e9e9e9"/>
<rect x="264.60" y="139.70" width="1.10" height="700.00" fill="#c0c0c0"/>
<rect x="263.00" y="143.60" width="4.50" height="4.90" fill="#d9d9d9"/>
<rect x="263.00" y="143.60" width="4.50" height="1.00" fill="#f8f8f8"/>
<rect x="263.00" y="143.60" width="1.00" height="4.90" fill="#f8f8f8"/>
<rect x="263.00" y="147.50" width="4.50" height="1.00" fill="#9a9a9a"/>
<rect x="266.50" y="143.60" width="1.00" height="4.90" fill="#9a9a9a"/>
<rect x="0.40" y="10.30" width="0.95" height="740.00" fill="#5a5a5a"/>
</svg>
<div style="top:-8.30px;height:21.2px;line-height:21.2px;font-size:10.6px;color:#b8b8b8;white-space:pre;transform:scaleY(0.93);font-weight:bold;left:157.60px;width:400px;text-align:center;font-stretch:condensed;font-family:'DejaVu Sans Condensed','DejaVu Sans',sans-serif;">Heapy Profile Browser: /home/rtpg/tmp/after_no_exc_storage.stats</div>
<div style="top:11.90px;height:20px;line-height:20px;font-size:10px;color:#000;white-space:pre;transform:scaleY(0.93);left:7.40px;">File</div>
<div style="top:11.90px;height:20px;line-height:20px;font-size:10px;color:#000;white-space:pre;transform:scaleY(0.93);left:35.20px;">Pane</div>
<div style="top:11.90px;height:20px;line-height:20px;font-size:10px;color:#000;white-space:pre;transform:scaleY(0.93);left:69.60px;">Graph</div>
<div style="top:11.90px;height:20px;line-height:20px;font-size:10px;color:#000;white-space:pre;transform:scaleY(0.93);left:110.80px;">Table</div>
<div style="top:11.90px;height:20px;line-height:20px;font-size:10px;color:#000;white-space:pre;transform:scaleY(0.93);left:148.30px;">Window</div>
<div style="top:11.90px;height:20px;line-height:20px;font-size:10px;color:#000;white-space:pre;transform:scaleY(0.93);left:198.60px;">Help</div>
<div style="top:39.50px;height:20px;line-height:20px;font-size:10px;color:#000;white-space:pre;transform:scaleY(0.93);left:-184.30px;width:400px;text-align:center;">X</div>
<div style="top:39.50px;height:20px;line-height:20px;font-size:10px;color:#000;white-space:pre;transform:scaleY(0.93);left:48.00px;">Range</div>
<div style="top:39.50px;height:20px;line-height:20px;font-size:10px;color:#000;white-space:pre;transform:scaleY(0.93);left:-105.40px;width:400px;text-align:center;">-</div>
<div style="top:39.50px;height:20px;line-height:20px;font-size:10px;color:#000;white-space:pre;transform:scaleY(0.93);left:-94.70px;width:400px;text-align:center;">+</div>
<div style="top:61.60px;height:20px;line-height:20px;font-size:10px;color:#000;white-space:pre;transform:scaleY(0.93);left:23.60px;">Grid</div>
<div style="left:48.80px;top:62.10px;width:38.20px;height:18.30px;overflow:hidden;"><span style="position:absolute;left:1.5px;top:-0.90px;font-size:14.6px;line-height:20px;color:#200;transform:scaleY(0.93);transform-origin:50% 70%;">10</span></div>
<div style="top:89.10px;height:20px;line-height:20px;font-size:10px;color:#000;white-space:pre;transform:scaleY(0.93);left:-185.20px;width:400px;text-align:center;">Y</div>
<div style="top:89.10px;height:20px;line-height:20px;font-size:10px;color:#000;white-space:pre;transform:scaleY(0.93);left:48.00px;">Range</div>
<div style="top:89.10px;height:20px;line-height:20px;font-size:10px;color:#000;white-space:pre;transform:scaleY(0.93);left:-95.80px;width:400px;text-align:center;">-</div>
<div style="top:89.10px;height:20px;line-height:20px;font-size:10px;color:#000;white-space:pre;transform:scaleY(0.93);left:-85.20px;width:400px;text-align:center;">+</div>
<div style="top:111.20px;height:20px;line-height:20px;font-size:10px;color:#000;white-space:pre;transform:scaleY(0.93);left:23.60px;">Grid</div>
<div style="left:48.80px;top:112.00px;width:38.20px;height:18.30px;overflow:hidden;"><span style="position:absolute;left:1.5px;top:-0.90px;font-size:14.6px;line-height:20px;color:#200;transform:scaleY(0.93);transform-origin:50% 70%;">200M</span></div>
<div style="top:111.20px;height:20px;line-height:20px;font-size:10px;color:#000;white-space:pre;transform:scaleY(0.93);left:106.50px;">Auto</div>
<div style="top:38.50px;height:20px;line-height:20px;font-size:10px;color:#000;white-space:pre;transform:scaleY(0.93);left:137.50px;">A sample</div>
<div style="top:38.50px;height:20px;line-height:20px;font-size:10px;color:#000;white-space:pre;transform:scaleY(0.93);left:1.60px;width:400px;text-align:center;">-</div>
<div style="top:38.50px;height:20px;line-height:20px;font-size:10px;color:#000;white-space:pre;transform:scaleY(0.93);left:16.00px;width:400px;text-align:center;">+</div>
<div style="top:50.30px;height:35.2px;line-height:35.2px;font-size:17.6px;color:#ffff30;white-space:pre;transform:scaleY(0.93);font-family:'DejaVu Sans Mono','Liberation Mono',monospace;font-weight:bold;left:-39.60px;width:400px;text-align:center;">9</div>
<div style="top:57.70px;height:20px;line-height:20px;font-size:10px;color:#000;white-space:pre;transform:scaleY(0.93);left:204.70px;">Track</div>
<div style="top:50.40px;height:20px;line-height:20px;font-size:10px;color:#680000;white-space:pre;transform:scaleY(0.93);left:60.20px;width:400px;text-align:center;">Exit</div>
<div style="top:50.40px;height:20px;line-height:20px;font-size:10px;color:#000;white-space:pre;transform:scaleY(0.93);left:301.50px;">Collect</div>
<div style="top:88.00px;height:20px;line-height:20px;font-size:10px;color:#000;white-space:pre;transform:scaleY(0.93);left:137.50px;">B sample</div>
<div style="top:88.40px;height:20px;line-height:20px;font-size:10px;color:#000;white-space:pre;transform:scaleY(0.93);left:1.60px;width:400px;text-align:center;">-</div>
<div style="top:88.40px;height:20px;line-height:20px;font-size:10px;color:#000;white-space:pre;transform:scaleY(0.93);left:16.00px;width:400px;text-align:center;">+</div>
<div style="top:99.90px;height:35.2px;line-height:35.2px;font-size:17.6px;color:#ffff30;white-space:pre;transform:scaleY(0.93);font-family:'DejaVu Sans Mono','Liberation Mono',monospace;font-weight:bold;left:-39.60px;width:400px;text-align:center;">0</div>
<div style="top:107.50px;height:20px;line-height:20px;font-size:10px;color:#000;white-space:pre;transform:scaleY(0.93);left:204.70px;">Track</div>
<div style="top:137.10px;height:20px;line-height:20px;font-size:10px;color:#000;white-space:pre;transform:scaleY(0.93);left:4.50px;">200M</div>
<div style="top:149.50px;height:20px;line-height:20px;font-size:10px;color:#000;white-space:pre;transform:scaleY(0.93);left:-149.50px;width:400px;text-align:center;">B</div>
<div style="top:149.50px;height:20px;line-height:20px;font-size:10px;color:#000;white-space:pre;transform:scaleY(0.93);left:53.10px;width:400px;text-align:center;clip-path:inset(0 194.30px 0 0);">A</div>
<div style="top:150.10px;height:20px;line-height:20px;font-size:10px;color:#000;white-space:pre;transform:scaleY(0.93);left:4.50px;">Bytes</div>
<div style="left:4.00px;top:165.00px;width:27.00px;height:564.80px;overflow:hidden;"><span style="position:absolute;left:18.47px;top:549.00px;line-height:20px;font-size:10px;transform:scaleY(0.93);">0</span><span style="position:absolute;left:13.54px;top:520.81px;line-height:20px;font-size:10px;transform:scaleY(0.93);">10</span><span style="position:absolute;left:13.54px;top:492.62px;line-height:20px;font-size:10px;transform:scaleY(0.93);">20</span><span style="position:absolute;left:13.54px;top:464.43px;line-height:20px;font-size:10px;transform:scaleY(0.93);">30</span><span style="position:absolute;left:13.54px;top:436.24px;line-height:20px;font-size:10px;transform:scaleY(0.93);">40</span><span style="position:absolute;left:13.54px;top:408.05px;line-height:20px;font-size:10px;transform:scaleY(0.93);">50</span><span style="position:absolute;left:13.54px;top:379.86px;line-height:20px;font-size:10px;transform:scaleY(0.93);">60</span><span style="position:absolute;left:13.54px;top:351.67px;line-height:20px;font-size:10px;transform:scaleY(0.93);">70</span><span style="position:absolute;left:13.54px;top:323.48px;line-height:20px;font-size:10px;transform:scaleY(0.93);">80</span><span style="position:absolute;left:13.54px;top:295.29px;line-height:20px;font-size:10px;transform:scaleY(0.93);">90</span><span style="position:absolute;left:8.61px;top:267.10px;line-height:20px;font-size:10px;transform:scaleY(0.93);">100</span><span style="position:absolute;left:8.61px;top:238.91px;line-height:20px;font-size:10px;transform:scaleY(0.93);">110</span><span style="position:absolute;left:8.61px;top:210.72px;line-height:20px;font-size:10px;transform:scaleY(0.93);">120</span><span style="position:absolute;left:8.61px;top:182.53px;line-height:20px;font-size:10px;transform:scaleY(0.93);">130</span><span style="position:absolute;left:8.61px;top:154.34px;line-height:20px;font-size:10px;transform:scaleY(0.93);">140</span><span style="position:absolute;left:8.61px;top:126.15px;line-height:20px;font-size:10px;transform:scaleY(0.93);">150</span><span style="position:absolute;left:8.61px;top:97.96px;line-height:20px;font-size:10px;transform:scaleY(0.93);">160</span><span style="position:absolute;left:8.61px;top:69.77px;line-height:20px;font-size:10px;transform:scaleY(0.93);">170</span><span style="position:absolute;left:8.61px;top:41.58px;line-height:20px;font-size:10px;transform:scaleY(0.93);">180</span><span style="position:absolute;left:8.61px;top:13.39px;line-height:20px;font-size:10px;transform:scaleY(0.93);">190</span></div>
<div style="left:5.60px;top:730.80px;width:25.60px;height:11.00px;overflow:hidden;"><span style="position:absolute;left:-5.6px;top:-3.30px;line-height:20px;font-size:10px;transform:scaleY(0.93);">Sample</span></div>
<div style="left:4.00px;top:733.00px;width:254.80px;height:8.80px;overflow:hidden;"><span style="position:absolute;left:36.60px;width:20px;text-align:center;top:1.50px;line-height:20px;font-size:10px;transform:scaleY(0.93);">0</span><span style="position:absolute;left:59.10px;width:20px;text-align:center;top:1.50px;line-height:20px;font-size:10px;transform:scaleY(0.93);">1</span><span style="position:absolute;left:81.30px;width:20px;text-align:center;top:1.50px;line-height:20px;font-size:10px;transform:scaleY(0.93);">2</span><span style="position:absolute;left:103.80px;width:20px;text-align:center;top:1.50px;line-height:20px;font-size:10px;transform:scaleY(0.93);">3</span><span style="position:absolute;left:126.30px;width:20px;text-align:center;top:1.50px;line-height:20px;font-size:10px;transform:scaleY(0.93);">4</span><span style="position:absolute;left:148.80px;width:20px;text-align:center;top:1.50px;line-height:20px;font-size:10px;transform:scaleY(0.93);">5</span><span style="position:absolute;left:171.20px;width:20px;text-align:center;top:1.50px;line-height:20px;font-size:10px;transform:scaleY(0.93);">6</span><span style="position:absolute;left:193.50px;width:20px;text-align:center;top:1.50px;line-height:20px;font-size:10px;transform:scaleY(0.93);">7</span><span style="position:absolute;left:216.10px;width:20px;text-align:center;top:1.50px;line-height:20px;font-size:10px;transform:scaleY(0.93);">8</span><span style="position:absolute;left:238.40px;width:20px;text-align:center;top:1.50px;line-height:20px;font-size:10px;transform:scaleY(0.93);">9</span></div>
<div style="top:138.30px;height:20px;line-height:20px;font-size:10px;color:#000;white-space:pre;transform:scaleY(0.93);font-family:'DejaVu Sans Mono','Liberation Mono',monospace;left:273.90px;">Sample A: 9 at Sun Aug 30 22:25:04 2020</div>
<div style="top:165.40px;height:20px;line-height:20px;font-size:10px;color:#000;white-space:pre;transform:scaleY(0.93);font-family:'DejaVu Sans Mono','Liberation Mono',monospace;left:273.90px;">A   Size %A:Tot  Cumul %A:Tot Kind</div>
<div style="top:183.80px;height:20px;line-height:20px;font-size:10px;color:#000;white-space:pre;transform:scaleY(0.93);font-family:'DejaVu Sans Mono','Liberation Mono',monospace;left:275.90px;">    101M    100   101M    100 &lt;Total&gt;</div>
<div style="top:207.50px;height:24px;line-height:24px;font-size:12px;color:#000000;white-space:pre;transform:scaleY(0.93);font-family:'DejaVu Sans Mono','Liberation Mono',monospace;font-weight:bold;left:273.60px;text-shadow:0 0 1px #000000;">@</div>
<div style="top:210.20px;height:20px;line-height:20px;font-size:10px;color:#000;white-space:pre;transform:scaleY(0.93);font-family:'DejaVu Sans Mono','Liberation Mono',monospace;left:281.92px;"> 37205K     37 37205K     37 &lt;Other&gt;</div>
<div style="top:221.90px;height:24px;line-height:24px;font-size:12px;color:#ffffff;white-space:pre;transform:scaleY(0.93);font-family:'DejaVu Sans Mono','Liberation Mono',monospace;font-weight:bold;left:273.60px;text-shadow:0 0 1px #ffffff;">@</div>
<div style="top:224.60px;height:20px;line-height:20px;font-size:10px;color:#000;white-space:pre;transform:scaleY(0.93);font-family:'DejaVu Sans Mono','Liberation Mono',monospace;left:281.92px;"> 13815K     14 51020K     50 list</div>
<div style="top:236.40px;height:24px;line-height:24px;font-size:12px;color:#ffff40;white-space:pre;transform:scaleY(0.93);font-family:'DejaVu Sans Mono','Liberation Mono',monospace;font-weight:bold;left:273.60px;text-shadow:0 0 1px #ffff40;">@</div>
<div style="top:239.10px;height:20px;line-height:20px;font-size:10px;color:#000;white-space:pre;transform:scaleY(0.93);font-family:'DejaVu Sans Mono','Liberation Mono',monospace;left:281.92px;">  9334K    9.2 60354K     60 dict (no owner)</div>
<div style="top:250.90px;height:24px;line-height:24px;font-size:12px;color:#109010;white-space:pre;transform:scaleY(0.93);font-family:'DejaVu Sans Mono','Liberation Mono',monospace;font-weight:bold;left:273.60px;text-shadow:0 0 1px #109010;">@</div>
<div style="top:253.60px;height:20px;line-height:20px;font-size:10px;color:#000;white-space:pre;transform:scaleY(0.93);font-family:'DejaVu Sans Mono','Liberation Mono',monospace;left:281.92px;">  9112K      9 69465K     69 dict of astroid.node_classes.Name</div>
<div style="top:265.40px;height:24px;line-height:24px;font-size:12px;color:#ff2020;white-space:pre;transform:scaleY(0.93);font-family:'DejaVu Sans Mono','Liberation Mono',monospace;font-weight:bold;left:273.60px;text-shadow:0 0 1px #ff2020;">@</div>
<div style="top:268.10px;height:20px;line-height:20px;font-size:10px;color:#000;white-space:pre;transform:scaleY(0.93);font-family:'DejaVu Sans Mono','Liberation Mono',monospace;left:281.92px;">  7131K    7.1 76596K     76 str</div>
<div style="top:279.90px;height:24px;line-height:24px;font-size:12px;color:#2020ff;white-space:pre;transform:scaleY(0.93);font-family:'DejaVu Sans Mono','Liberation Mono',monospace;font-weight:bold;left:273.60px;text-shadow:0 0 1px #2020ff;">@</div>
<div style="top:282.60px;height:20px;line-height:20px;font-size:10px;color:#000;white-space:pre;transform:scaleY(0.93);font-family:'DejaVu Sans Mono','Liberation Mono',monospace;left:281.92px;">  6466K    6.4 83062K     82 tuple</div>
<div style="top:294.40px;height:24px;line-height:24px;font-size:12px;color:#ff40ff;white-space:pre;transform:scaleY(0.93);font-family:'DejaVu Sans Mono','Liberation Mono',monospace;font-weight:bold;left:273.60px;text-shadow:0 0 1px #ff40ff;">@</div>
<div style="top:297.10px;height:20px;line-height:20px;font-size:10px;color:#000;white-space:pre;transform:scaleY(0.93);font-family:'DejaVu Sans Mono','Liberation Mono',monospace;left:281.92px;">  5370K    5.3 88432K     87 dict of astroid.node_classes.Const</div>
<div style="top:308.90px;height:24px;line-height:24px;font-size:12px;color:#2020ff;white-space:pre;transform:scaleY(0.93);font-family:'DejaVu Sans Mono','Liberation Mono',monospace;font-weight:bold;left:273.60px;text-shadow:0 0 1px #2020ff;">@</div>
<div style="top:311.60px;height:20px;line-height:20px;font-size:10px;color:#000;white-space:pre;transform:scaleY(0.93);font-family:'DejaVu Sans Mono','Liberation Mono',monospace;left:281.92px;">  3740K    3.7 92172K     91 dict of astroid.node_classes.Call</div>
<div style="top:323.40px;height:24px;line-height:24px;font-size:12px;color:#ffffff;white-space:pre;transform:scaleY(0.93);font-family:'DejaVu Sans Mono','Liberation Mono',monospace;font-weight:bold;left:273.60px;text-shadow:0 0 1px #ffffff;">@</div>
<div style="top:326.10px;height:20px;line-height:20px;font-size:10px;color:#000;white-space:pre;transform:scaleY(0.93);font-family:'DejaVu Sans Mono','Liberation Mono',monospace;left:281.92px;">  3045K      3 95217K     94 dict of astroid.node_classes.AssignName</div>
<div style="top:337.90px;height:24px;line-height:24px;font-size:12px;color:#30f0f0;white-space:pre;transform:scaleY(0.93);font-family:'DejaVu Sans Mono','Liberation Mono',monospace;font-weight:bold;left:273.60px;text-shadow:0 0 1px #30f0f0;">@</div>
<div style="top:340.60px;height:20px;line-height:20px;font-size:10px;color:#000;white-space:pre;transform:scaleY(0.93);font-family:'DejaVu Sans Mono','Liberation Mono',monospace;left:281.92px;">  3040K      3 98257K     97 dict of astroid.node_classes.Attribute</div>
<div style="top:352.30px;height:24px;line-height:24px;font-size:12px;color:#ff2020;white-space:pre;transform:scaleY(0.93);font-family:'DejaVu Sans Mono','Liberation Mono',monospace;font-weight:bold;left:273.60px;text-shadow:0 0 1px #ff2020;">@</div>
<div style="top:355.00px;height:20px;line-height:20px;font-size:10px;color:#000;white-space:pre;transform:scaleY(0.93);font-family:'DejaVu Sans Mono','Liberation Mono',monospace;left:281.92px;">  2843K    2.8   101M    100 dict of astroid.node_classes.Arguments</div>
</div>
</body></html>
